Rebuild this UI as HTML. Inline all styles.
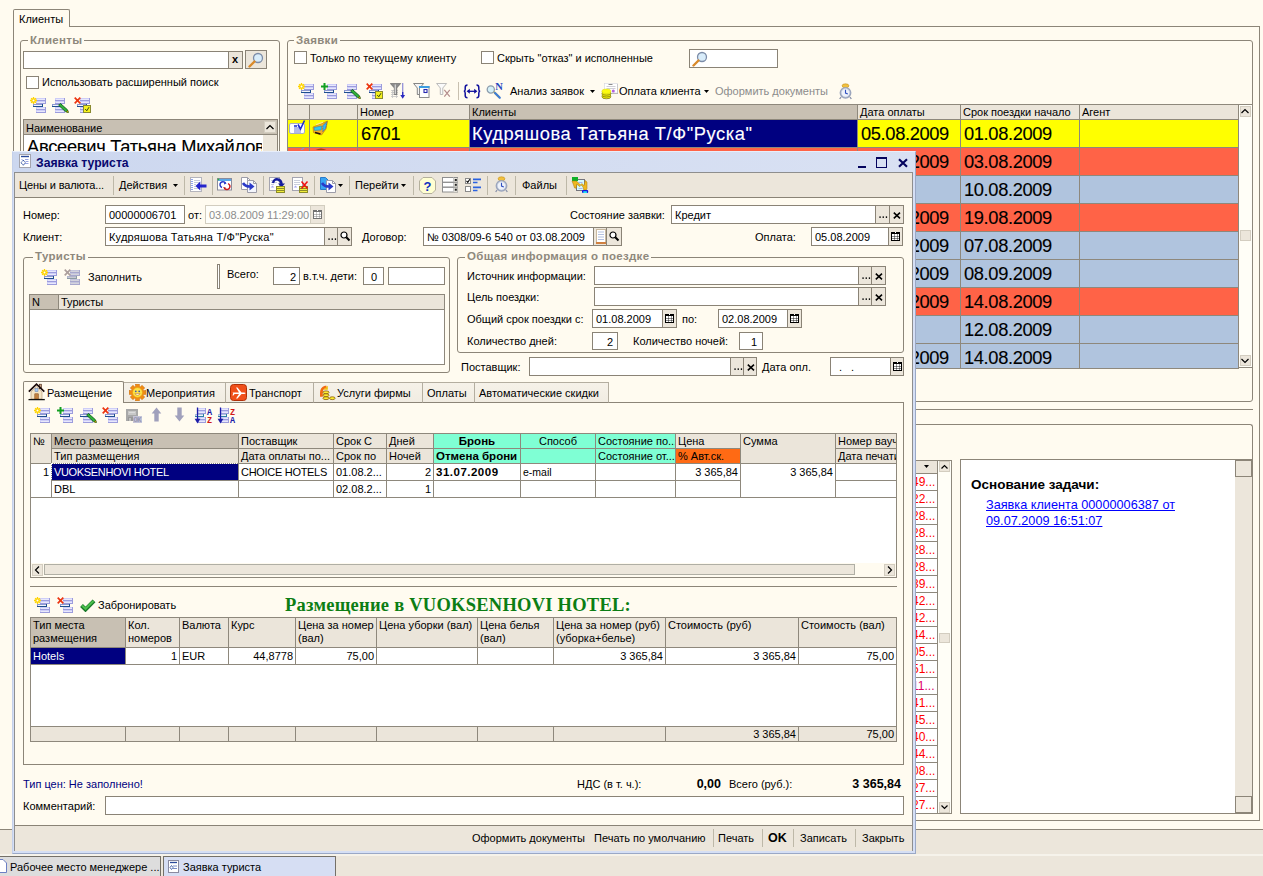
<!DOCTYPE html>
<html lang="ru"><head><meta charset="utf-8"><title>Заявка туриста</title>
<style>
html,body{margin:0;padding:0}
body{width:1263px;height:876px;overflow:hidden;position:relative;background:#ECE6DB;font:11px "Liberation Sans",sans-serif;color:#000}
div,svg,span.a{position:absolute;box-sizing:border-box}
.t{white-space:nowrap;line-height:14px;font-size:11px}
.ft{position:absolute;left:3px;top:2px;white-space:nowrap;line-height:14px}
.big{white-space:nowrap;font-size:18.3px;line-height:26px;-webkit-text-stroke:.12px currentColor}
.c{overflow:hidden;white-space:nowrap}
</style></head><body>

<div style="left:0px;top:0px;width:1263px;height:830px;background:#FFFBF0;border-bottom:1px solid #8C8578"></div>
<div style="left:13px;top:26px;width:1247px;height:795px;border:1px solid #8C8578"></div>
<div style="left:13px;top:9px;width:57px;height:18px;background:#FFFBF0;border:1px solid #8C8578;border-bottom:none;border-radius:2px 2px 0 0"></div>
<div class="t" style="left:19px;top:12px;">Клиенты</div>
<div style="left:20px;top:40px;width:260px;height:790px;border:1px solid #8C8578;border-radius:3px"></div>
<div class="t" style="left:28px;top:33px;background:#FFFBF0;padding:0 2px;font-weight:bold;color:#8E887C;font-size:11.5px;letter-spacing:.3px">Клиенты</div>
<div style="left:23px;top:51px;width:206px;height:18px;background:#fff;border:1px solid #8A8376;box-sizing:border-box;"></div>
<div class="b" style="left:228px;top:51px;width:15px;height:18px;background:#ECE6DB;border:1px solid #8A8376;box-sizing:border-box;"><span class="a" style="left:3px;top:0;font:bold 11px 'Liberation Sans';line-height:15px">x</span></div>
<div class="b" style="left:245px;top:50px;width:22px;height:19px;background:#ECE6DB;border:1px solid #8A8376;box-sizing:border-box;"></div>
<svg style="left:248px;top:52px" width="16" height="16" viewBox="0 0 16 16"><circle cx="10" cy="6" r="4.5" fill="#D8ECFA" stroke="#7C8CA8" stroke-width="1.3"/><path d="M6.5 9.5 L1.5 14.5" stroke="#D98A2B" stroke-width="2.4" stroke-linecap="round"/></svg>
<div style="left:26px;top:76px;width:13px;height:13px;background:#fff;border:1px solid #8A8376"></div>
<div class="t" style="left:42px;top:75px;">Использовать расширенный поиск</div>
<svg style="left:30px;top:97px" width="16" height="16" viewBox="0 0 16 16"><g shape-rendering="crispEdges"><rect x="6" y="1" width="10" height="3" fill="#CDCDF8"/><rect x="7" y="2" width="8" height="1" fill="#E8E8FB"/><rect x="6" y="3" width="10" height="1" fill="#9C9CDC"/><rect x="15" y="1" width="1" height="3" fill="#9C9CDC"/><rect x="6" y="4" width="10" height="3" fill="#CDCDF8"/><rect x="7" y="5" width="8" height="1" fill="#E8E8FB"/><rect x="6" y="6" width="10" height="1" fill="#9C9CDC"/><rect x="15" y="4" width="1" height="3" fill="#9C9CDC"/><rect x="3" y="7" width="10" height="3" fill="#8C98D0"/><rect x="4" y="8" width="8" height="1" fill="#F4F4FC"/><rect x="3" y="9" width="10" height="1" fill="#1E4E8E"/><rect x="12" y="7" width="1" height="3" fill="#1E4E8E"/><rect x="6" y="10" width="10" height="3" fill="#CDCDF8"/><rect x="7" y="11" width="8" height="1" fill="#E8E8FB"/><rect x="6" y="12" width="10" height="1" fill="#9C9CDC"/><rect x="15" y="10" width="1" height="3" fill="#9C9CDC"/><rect x="6" y="13" width="10" height="3" fill="#CDCDF8"/><rect x="7" y="14" width="8" height="1" fill="#E8E8FB"/><rect x="6" y="15" width="10" height="1" fill="#9C9CDC"/><rect x="15" y="13" width="1" height="3" fill="#9C9CDC"/></g><path d="M3.5 0V7M0 3.5H7M1.1 1.100L5.900 5.900M5.900 1.100L1.100 5.900" stroke="#FFD400" stroke-width="1.300"/><circle cx="3.500" cy="3.500" r="2.200" fill="#FFD400"/><circle cx="3.500" cy="3.500" r="1" fill="#fff"/></svg>
<svg style="left:49px;top:97px" width="20" height="16" viewBox="0 0 20 16"><g shape-rendering="crispEdges"><rect x="6" y="1" width="10" height="3" fill="#CDCDF8"/><rect x="7" y="2" width="8" height="1" fill="#E8E8FB"/><rect x="6" y="3" width="10" height="1" fill="#9C9CDC"/><rect x="15" y="1" width="1" height="3" fill="#9C9CDC"/><rect x="6" y="4" width="10" height="3" fill="#CDCDF8"/><rect x="7" y="5" width="8" height="1" fill="#E8E8FB"/><rect x="6" y="6" width="10" height="1" fill="#9C9CDC"/><rect x="15" y="4" width="1" height="3" fill="#9C9CDC"/><rect x="3" y="7" width="10" height="3" fill="#8C98D0"/><rect x="4" y="8" width="8" height="1" fill="#F4F4FC"/><rect x="3" y="9" width="10" height="1" fill="#1E4E8E"/><rect x="12" y="7" width="1" height="3" fill="#1E4E8E"/><rect x="6" y="10" width="10" height="3" fill="#CDCDF8"/><rect x="7" y="11" width="8" height="1" fill="#E8E8FB"/><rect x="6" y="12" width="10" height="1" fill="#9C9CDC"/><rect x="15" y="10" width="1" height="3" fill="#9C9CDC"/><rect x="6" y="13" width="10" height="3" fill="#CDCDF8"/><rect x="7" y="14" width="8" height="1" fill="#E8E8FB"/><rect x="6" y="15" width="10" height="1" fill="#9C9CDC"/><rect x="15" y="13" width="1" height="3" fill="#9C9CDC"/></g><path d="M9.6 8.2 L11.4 6.4 L18.3 12.6 L19.3 15.4 L16.4 14.6Z" fill="#2FB03A" stroke="#0B5B12" stroke-width=".8"/><path d="M17.2 14.9 L19.3 15.4 L18.7 13.2Z" fill="#F7E000" stroke="#3A3A00" stroke-width=".5"/></svg>
<svg style="left:74px;top:97px" width="17" height="16" viewBox="0 0 17 16"><g shape-rendering="crispEdges"><rect x="6" y="1" width="10" height="3" fill="#CDCDF8"/><rect x="7" y="2" width="8" height="1" fill="#E8E8FB"/><rect x="6" y="3" width="10" height="1" fill="#9C9CDC"/><rect x="15" y="1" width="1" height="3" fill="#9C9CDC"/><rect x="6" y="4" width="10" height="3" fill="#CDCDF8"/><rect x="7" y="5" width="8" height="1" fill="#E8E8FB"/><rect x="6" y="6" width="10" height="1" fill="#9C9CDC"/><rect x="15" y="4" width="1" height="3" fill="#9C9CDC"/><rect x="3" y="7" width="10" height="3" fill="#8C98D0"/><rect x="4" y="8" width="8" height="1" fill="#F4F4FC"/><rect x="3" y="9" width="10" height="1" fill="#1E4E8E"/><rect x="12" y="7" width="1" height="3" fill="#1E4E8E"/><rect x="6" y="10" width="10" height="3" fill="#CDCDF8"/><rect x="7" y="11" width="8" height="1" fill="#E8E8FB"/><rect x="6" y="12" width="10" height="1" fill="#9C9CDC"/><rect x="15" y="10" width="1" height="3" fill="#9C9CDC"/><rect x="6" y="13" width="10" height="3" fill="#CDCDF8"/><rect x="7" y="14" width="8" height="1" fill="#E8E8FB"/><rect x="6" y="15" width="10" height="1" fill="#9C9CDC"/><rect x="15" y="13" width="1" height="3" fill="#9C9CDC"/></g><path d="M0.700 0.700 L6.300 6.300 M6.300 0.700 L0.700 6.300" stroke="#EC3410" stroke-width="1.700"/><rect x="9.5" y="8.5" width="7" height="7" fill="#F4F01E" stroke="#8A8A30"/><path d="M11.2 12l1.6 1.8 2.2-3.6" stroke="#3A4A1A" fill="none"/></svg>
<div style="left:23px;top:119px;width:255px;height:700px;background:#fff;border:1px solid #8C8578"></div>
<div style="left:24px;top:120px;width:253px;height:15px;background:#C8C0B3;border-bottom:1px solid #8E887C"></div>
<div class="t" style="left:26px;top:121px;">Наименование</div>
<div style="left:264px;top:121px;width:12px;height:12px;background:#ECE6DB;border:1px solid #D3CDC0"></div>
<svg style="left:266px;top:124px" width="8" height="6" viewBox="0 0 8 6"><path d="M0.5 5 L4 1.5 L7.5 5" fill="none" stroke="#000" stroke-width="1.2"/></svg>
<div style="left:263px;top:135px;width:14px;height:20px;background:#ECE6DB"></div>
<div class="big c" style="left:27px;top:134px;width:235px;height:20px;letter-spacing:-0.28px">Авсеевич Татьяна Михайловна</div>
<div style="left:287px;top:40px;width:966px;height:362px;border:1px solid #8C8578;border-radius:3px"></div>
<div class="t" style="left:294px;top:33px;background:#FFFBF0;padding:0 2px;font-weight:bold;color:#8E887C;font-size:11.5px;letter-spacing:.3px">Заявки</div>
<div style="left:294px;top:51px;width:13px;height:13px;background:#fff;border:1px solid #8A8376"></div>
<div class="t" style="left:310px;top:51px;">Только по текущему клиенту</div>
<div style="left:481px;top:51px;width:13px;height:13px;background:#fff;border:1px solid #8A8376"></div>
<div class="t" style="left:497px;top:51px;">Скрыть &quot;отказ&quot; и исполненные</div>
<div style="left:689px;top:49px;width:89px;height:19px;background:#fff;border:1px solid #8A8376;box-sizing:border-box;"></div>
<svg style="left:692px;top:51px" width="16" height="16" viewBox="0 0 16 16"><circle cx="10" cy="6" r="4.5" fill="#D8ECFA" stroke="#7C8CA8" stroke-width="1.3"/><path d="M6.5 9.5 L1.5 14.5" stroke="#D98A2B" stroke-width="2.4" stroke-linecap="round"/></svg>
<svg style="left:298px;top:83px" width="16" height="16" viewBox="0 0 16 16"><g shape-rendering="crispEdges"><rect x="6" y="1" width="10" height="3" fill="#CDCDF8"/><rect x="7" y="2" width="8" height="1" fill="#E8E8FB"/><rect x="6" y="3" width="10" height="1" fill="#9C9CDC"/><rect x="15" y="1" width="1" height="3" fill="#9C9CDC"/><rect x="6" y="4" width="10" height="3" fill="#CDCDF8"/><rect x="7" y="5" width="8" height="1" fill="#E8E8FB"/><rect x="6" y="6" width="10" height="1" fill="#9C9CDC"/><rect x="15" y="4" width="1" height="3" fill="#9C9CDC"/><rect x="3" y="7" width="10" height="3" fill="#8C98D0"/><rect x="4" y="8" width="8" height="1" fill="#F4F4FC"/><rect x="3" y="9" width="10" height="1" fill="#1E4E8E"/><rect x="12" y="7" width="1" height="3" fill="#1E4E8E"/><rect x="6" y="10" width="10" height="3" fill="#CDCDF8"/><rect x="7" y="11" width="8" height="1" fill="#E8E8FB"/><rect x="6" y="12" width="10" height="1" fill="#9C9CDC"/><rect x="15" y="10" width="1" height="3" fill="#9C9CDC"/><rect x="6" y="13" width="10" height="3" fill="#CDCDF8"/><rect x="7" y="14" width="8" height="1" fill="#E8E8FB"/><rect x="6" y="15" width="10" height="1" fill="#9C9CDC"/><rect x="15" y="13" width="1" height="3" fill="#9C9CDC"/></g><path d="M3.5 0V7M0 3.5H7M1.1 1.100L5.900 5.900M5.900 1.100L1.100 5.900" stroke="#FFD400" stroke-width="1.300"/><circle cx="3.500" cy="3.500" r="2.200" fill="#FFD400"/><circle cx="3.500" cy="3.500" r="1" fill="#fff"/></svg>
<svg style="left:321px;top:83px" width="16" height="16" viewBox="0 0 16 16"><g shape-rendering="crispEdges"><rect x="6" y="1" width="10" height="3" fill="#CDCDF8"/><rect x="7" y="2" width="8" height="1" fill="#E8E8FB"/><rect x="6" y="3" width="10" height="1" fill="#9C9CDC"/><rect x="15" y="1" width="1" height="3" fill="#9C9CDC"/><rect x="6" y="4" width="10" height="3" fill="#CDCDF8"/><rect x="7" y="5" width="8" height="1" fill="#E8E8FB"/><rect x="6" y="6" width="10" height="1" fill="#9C9CDC"/><rect x="15" y="4" width="1" height="3" fill="#9C9CDC"/><rect x="3" y="7" width="10" height="3" fill="#8C98D0"/><rect x="4" y="8" width="8" height="1" fill="#F4F4FC"/><rect x="3" y="9" width="10" height="1" fill="#1E4E8E"/><rect x="12" y="7" width="1" height="3" fill="#1E4E8E"/><rect x="6" y="10" width="10" height="3" fill="#CDCDF8"/><rect x="7" y="11" width="8" height="1" fill="#E8E8FB"/><rect x="6" y="12" width="10" height="1" fill="#9C9CDC"/><rect x="15" y="10" width="1" height="3" fill="#9C9CDC"/><rect x="6" y="13" width="10" height="3" fill="#CDCDF8"/><rect x="7" y="14" width="8" height="1" fill="#E8E8FB"/><rect x="6" y="15" width="10" height="1" fill="#9C9CDC"/><rect x="15" y="13" width="1" height="3" fill="#9C9CDC"/></g><path d="M0 3.5H7M3.5 0V7" stroke="#12A022" stroke-width="2"/></svg>
<svg style="left:341px;top:83px" width="20" height="16" viewBox="0 0 20 16"><g shape-rendering="crispEdges"><rect x="6" y="1" width="10" height="3" fill="#CDCDF8"/><rect x="7" y="2" width="8" height="1" fill="#E8E8FB"/><rect x="6" y="3" width="10" height="1" fill="#9C9CDC"/><rect x="15" y="1" width="1" height="3" fill="#9C9CDC"/><rect x="6" y="4" width="10" height="3" fill="#CDCDF8"/><rect x="7" y="5" width="8" height="1" fill="#E8E8FB"/><rect x="6" y="6" width="10" height="1" fill="#9C9CDC"/><rect x="15" y="4" width="1" height="3" fill="#9C9CDC"/><rect x="3" y="7" width="10" height="3" fill="#8C98D0"/><rect x="4" y="8" width="8" height="1" fill="#F4F4FC"/><rect x="3" y="9" width="10" height="1" fill="#1E4E8E"/><rect x="12" y="7" width="1" height="3" fill="#1E4E8E"/><rect x="6" y="10" width="10" height="3" fill="#CDCDF8"/><rect x="7" y="11" width="8" height="1" fill="#E8E8FB"/><rect x="6" y="12" width="10" height="1" fill="#9C9CDC"/><rect x="15" y="10" width="1" height="3" fill="#9C9CDC"/><rect x="6" y="13" width="10" height="3" fill="#CDCDF8"/><rect x="7" y="14" width="8" height="1" fill="#E8E8FB"/><rect x="6" y="15" width="10" height="1" fill="#9C9CDC"/><rect x="15" y="13" width="1" height="3" fill="#9C9CDC"/></g><path d="M9.6 8.2 L11.4 6.4 L18.3 12.6 L19.3 15.4 L16.4 14.6Z" fill="#2FB03A" stroke="#0B5B12" stroke-width=".8"/><path d="M17.2 14.9 L19.3 15.4 L18.7 13.2Z" fill="#F7E000" stroke="#3A3A00" stroke-width=".5"/></svg>
<svg style="left:366px;top:83px" width="17" height="16" viewBox="0 0 17 16"><g shape-rendering="crispEdges"><rect x="6" y="1" width="10" height="3" fill="#CDCDF8"/><rect x="7" y="2" width="8" height="1" fill="#E8E8FB"/><rect x="6" y="3" width="10" height="1" fill="#9C9CDC"/><rect x="15" y="1" width="1" height="3" fill="#9C9CDC"/><rect x="6" y="4" width="10" height="3" fill="#CDCDF8"/><rect x="7" y="5" width="8" height="1" fill="#E8E8FB"/><rect x="6" y="6" width="10" height="1" fill="#9C9CDC"/><rect x="15" y="4" width="1" height="3" fill="#9C9CDC"/><rect x="3" y="7" width="10" height="3" fill="#8C98D0"/><rect x="4" y="8" width="8" height="1" fill="#F4F4FC"/><rect x="3" y="9" width="10" height="1" fill="#1E4E8E"/><rect x="12" y="7" width="1" height="3" fill="#1E4E8E"/><rect x="6" y="10" width="10" height="3" fill="#CDCDF8"/><rect x="7" y="11" width="8" height="1" fill="#E8E8FB"/><rect x="6" y="12" width="10" height="1" fill="#9C9CDC"/><rect x="15" y="10" width="1" height="3" fill="#9C9CDC"/><rect x="6" y="13" width="10" height="3" fill="#CDCDF8"/><rect x="7" y="14" width="8" height="1" fill="#E8E8FB"/><rect x="6" y="15" width="10" height="1" fill="#9C9CDC"/><rect x="15" y="13" width="1" height="3" fill="#9C9CDC"/></g><path d="M0.700 0.700 L6.300 6.300 M6.300 0.700 L0.700 6.300" stroke="#EC3410" stroke-width="1.700"/><rect x="9.5" y="8.5" width="7" height="7" fill="#F4F01E" stroke="#8A8A30"/><path d="M11.2 12l1.6 1.8 2.2-3.6" stroke="#3A4A1A" fill="none"/></svg>
<svg style="left:390px;top:83px" width="16" height="16" viewBox="0 0 16 16"><path d="M1 7.500h7M1 9.500h7M1 11.500h7M1 13.500h7M2.500 7v8M6.500 7v8" stroke="#C4C4C4" stroke-width=".8"/><path d="M0.300 0.500H10.700L6.800 5V11.500H4.300V5Z" fill="#8C8C8C" stroke="#5C5C5C" stroke-width=".6"/><path d="M5.300 1.500V11" stroke="#D8D8D8" stroke-width="1.200"/><path d="M12.700 0.500V12" stroke="#2828C0" stroke-width="1.300" stroke-dasharray="1 1"/><path d="M12.700 9V13" stroke="#2828C0" stroke-width="1.300"/><path d="M10.300 12H15.100L12.700 15.800Z" fill="#2828C0"/></svg>
<svg style="left:413px;top:83px" width="17" height="16" viewBox="0 0 17 16"><path d="M0.600 0.500H10.600L6.800 5V11.500H4.300V5Z" fill="#F4F4F4" stroke="#787878" stroke-width=".9"/><rect x="6.500" y="3.500" width="9.500" height="11" fill="#fff" stroke="#8C8C8C"/><rect x="6" y="3" width="10.500" height="2" fill="#3C9CE0"/><rect x="11" y="6.500" width="3" height="3" fill="#fff" stroke="#2828B0" stroke-width="1.100"/></svg>
<svg style="left:436px;top:83px" width="16" height="16" viewBox="0 0 16 16"><path d="M0.600 0.500H10.600L6.800 5V11.500H4.300V5Z" fill="#FAFAFA" stroke="#B4B4B4" stroke-width=".9"/><path d="M8.300 6.800L13.800 13.600M13.800 6.800L8.300 13.600" stroke="#B48C8C" stroke-width="1.200"/></svg>
<div style="left:458px;top:82px;width:1px;height:18px;background:#C8C0B0"></div>
<svg style="left:463px;top:84px" width="18" height="15" viewBox="0 0 18 15"><path d="M4.500 1Q2.200 1 2.200 3.500V5.500Q2.200 7.200 0.800 7.200Q2.200 7.200 2.200 9V11.500Q2.200 13.800 4.500 13.800M13.500 1Q15.800 1 15.800 3.500V5.500Q15.800 7.200 17.200 7.200Q15.800 7.200 15.800 9V11.500Q15.800 13.800 13.500 13.800" fill="none" stroke="#10109C" stroke-width="1.500"/><path d="M5 7.300H13" stroke="#10109C" stroke-width="1.300"/><path d="M3.600 7.300L6.800 4.800V9.800ZM14.400 7.300L11.200 4.800V9.800Z" fill="#10109C"/></svg>
<svg style="left:486px;top:82px" width="18" height="18" viewBox="0 0 18 18"><path d="M7.500 9.500L13.500 15.500" stroke="#E8D040" stroke-width="2.200"/><path d="M9 11L13.800 15.800" stroke="#3C7CD8" stroke-width="2.200" stroke-linecap="round"/><circle cx="4.800" cy="7.500" r="3.600" fill="#D4F0F8" stroke="#8C9CAC" stroke-width="1.300"/><text x="9.300" y="8.200" font-family="Liberation Serif" font-size="10.500" font-weight="bold" fill="#2448C0">N</text></svg>
<div class="t" style="left:510px;top:84px;">Анализ заявок</div>
<svg style="left:590px;top:90px" width="5" height="3" viewBox="0 0 5 3"><path d="M0 0H5L2.5 3Z" fill="#000"/></svg>
<svg style="left:601px;top:83px" width="18" height="17" viewBox="0 0 18 17"><rect x="4" y="1" width="13" height="9.800" fill="#9C9C9C"/><rect x="3.300" y="0.300" width="13" height="9.700" fill="#fff" stroke="#D4D4DC" stroke-width=".6"/><path d="M7.500 1.500h4" stroke="#8C8C8C" stroke-width="1"/><path d="M5.500 3.500h9M5.500 5.500h9" stroke="#C4C4CC" stroke-width=".8"/><circle cx="12.300" cy="8" r="1.500" fill="#B060E0"/><ellipse cx="5.400" cy="13.800" rx="4.500" ry="2" fill="#F0EC00" stroke="#74741C" stroke-width=".7"/><ellipse cx="5.400" cy="12" rx="4.500" ry="2" fill="#F0EC00" stroke="#74741C" stroke-width=".7"/><ellipse cx="5.400" cy="10.200" rx="4.500" ry="2" fill="#F0EC00" stroke="#74741C" stroke-width=".7"/><ellipse cx="5.400" cy="8.300" rx="4.500" ry="2.200" fill="#FCFC10" stroke="#DCDC20" stroke-width=".6"/></svg>
<div class="t" style="left:619px;top:84px;">Оплата клиента</div>
<svg style="left:704px;top:90px" width="5" height="3" viewBox="0 0 5 3"><path d="M0 0H5L2.5 3Z" fill="#000"/></svg>
<div class="t" style="left:715px;top:84px;color:#8C8C8C">Оформить документы</div>
<svg style="left:838px;top:83px" width="15" height="18" viewBox="0 0 15 18"><ellipse cx="7.500" cy="2.800" rx="3.400" ry="2" fill="#F0C040" stroke="#C89018" stroke-width=".6"/><path d="M3 14l-1.300 2M12 14l1.300 2" stroke="#8890A8" stroke-width="1.300"/><circle cx="7.500" cy="9.800" r="5.900" fill="#9AA4BC"/><circle cx="7.500" cy="9.800" r="4.200" fill="#EEF2FA" stroke="#C8D0E0" stroke-width=".6"/><path d="M7.500 6.800V10.100L9.800 11.100" stroke="#3050C0" fill="none" stroke-width="1.100"/></svg>
<div style="left:287px;top:104px;width:965px;height:264px;background:#FFFBF0;border:1px solid #8E887C"></div>
<div style="left:287px;top:104px;width:23px;height:16px;background:#EBE5DA;border:1px solid #8E887C"></div>
<div style="left:309px;top:104px;width:49px;height:16px;background:#EBE5DA;border:1px solid #8E887C"></div>
<div style="left:357px;top:104px;width:113px;height:16px;background:#EBE5DA;border:1px solid #8E887C"></div>
<div class="t" style="left:360px;top:105px;">Номер</div>
<div style="left:469px;top:104px;width:389px;height:16px;background:#C8C0B3;border:1px solid #8E887C"></div>
<div class="t" style="left:472px;top:105px;">Клиенты</div>
<div style="left:857px;top:104px;width:104px;height:16px;background:#EBE5DA;border:1px solid #8E887C"></div>
<div class="t" style="left:860px;top:105px;">Дата оплаты</div>
<div style="left:960px;top:104px;width:120px;height:16px;background:#EBE5DA;border:1px solid #8E887C"></div>
<div class="t" style="left:963px;top:105px;">Срок поездки начало</div>
<div style="left:1079px;top:104px;width:160px;height:16px;background:#EBE5DA;border:1px solid #8E887C"></div>
<div class="t" style="left:1082px;top:105px;">Агент</div>
<div style="left:287px;top:119px;width:23px;height:29px;background:#FFFF00;border:1px solid #8E887C;color:#000;overflow:hidden"></div>
<div style="left:309px;top:119px;width:49px;height:29px;background:#FFFF00;border:1px solid #8E887C;color:#000;overflow:hidden"></div>
<div style="left:357px;top:119px;width:113px;height:29px;background:#FFFF00;border:1px solid #8E887C;color:#000;overflow:hidden"><span class="a big" style="left:3px;top:1px;letter-spacing:-0.36px">6701</span></div>
<div style="left:469px;top:119px;width:389px;height:29px;background:#000080;border:1px solid #8E887C;color:#fff;overflow:hidden"><span class="a big" style="left:2px;top:1px;letter-spacing:0.57px">Кудряшова Татьяна Т/Ф&quot;Руска&quot;</span></div>
<div style="left:857px;top:119px;width:104px;height:29px;background:#FFFF00;border:1px solid #8E887C;color:#000;overflow:hidden"><span class="a big" style="left:3px;top:1px;letter-spacing:-0.36px">05.08.2009</span></div>
<div style="left:960px;top:119px;width:120px;height:29px;background:#FFFF00;border:1px solid #8E887C;color:#000;overflow:hidden"><span class="a big" style="left:3px;top:1px;letter-spacing:-0.36px">01.08.2009</span></div>
<div style="left:1079px;top:119px;width:160px;height:29px;background:#FFFF00;border:1px solid #8E887C;color:#000;overflow:hidden"></div>
<div style="left:287px;top:147px;width:23px;height:29px;background:#FF6347;border:1px solid #8E887C;color:#000;overflow:hidden"></div>
<div style="left:309px;top:147px;width:49px;height:29px;background:#FF6347;border:1px solid #8E887C;color:#000;overflow:hidden"></div>
<div style="left:357px;top:147px;width:113px;height:29px;background:#FF6347;border:1px solid #8E887C;color:#000;overflow:hidden"></div>
<div style="left:469px;top:147px;width:389px;height:29px;background:#FF6347;border:1px solid #8E887C;color:#000;overflow:hidden"></div>
<div style="left:857px;top:147px;width:104px;height:29px;background:#FF6347;border:1px solid #8E887C;color:#000;overflow:hidden"><span class="a big" style="left:3px;top:1px;letter-spacing:-0.36px">05.08.2009</span></div>
<div style="left:960px;top:147px;width:120px;height:29px;background:#FF6347;border:1px solid #8E887C;color:#000;overflow:hidden"><span class="a big" style="left:3px;top:1px;letter-spacing:-0.36px">03.08.2009</span></div>
<div style="left:1079px;top:147px;width:160px;height:29px;background:#FF6347;border:1px solid #8E887C;color:#000;overflow:hidden"></div>
<div style="left:287px;top:175px;width:23px;height:29px;background:#B0C4DE;border:1px solid #8E887C;color:#000;overflow:hidden"></div>
<div style="left:309px;top:175px;width:49px;height:29px;background:#B0C4DE;border:1px solid #8E887C;color:#000;overflow:hidden"></div>
<div style="left:357px;top:175px;width:113px;height:29px;background:#B0C4DE;border:1px solid #8E887C;color:#000;overflow:hidden"></div>
<div style="left:469px;top:175px;width:389px;height:29px;background:#B0C4DE;border:1px solid #8E887C;color:#000;overflow:hidden"></div>
<div style="left:857px;top:175px;width:104px;height:29px;background:#B0C4DE;border:1px solid #8E887C;color:#000;overflow:hidden"></div>
<div style="left:960px;top:175px;width:120px;height:29px;background:#B0C4DE;border:1px solid #8E887C;color:#000;overflow:hidden"><span class="a big" style="left:3px;top:1px;letter-spacing:-0.36px">10.08.2009</span></div>
<div style="left:1079px;top:175px;width:160px;height:29px;background:#B0C4DE;border:1px solid #8E887C;color:#000;overflow:hidden"></div>
<div style="left:287px;top:203px;width:23px;height:29px;background:#FF6347;border:1px solid #8E887C;color:#000;overflow:hidden"></div>
<div style="left:309px;top:203px;width:49px;height:29px;background:#FF6347;border:1px solid #8E887C;color:#000;overflow:hidden"></div>
<div style="left:357px;top:203px;width:113px;height:29px;background:#FF6347;border:1px solid #8E887C;color:#000;overflow:hidden"></div>
<div style="left:469px;top:203px;width:389px;height:29px;background:#FF6347;border:1px solid #8E887C;color:#000;overflow:hidden"></div>
<div style="left:857px;top:203px;width:104px;height:29px;background:#FF6347;border:1px solid #8E887C;color:#000;overflow:hidden"><span class="a big" style="left:3px;top:1px;letter-spacing:-0.36px">17.08.2009</span></div>
<div style="left:960px;top:203px;width:120px;height:29px;background:#FF6347;border:1px solid #8E887C;color:#000;overflow:hidden"><span class="a big" style="left:3px;top:1px;letter-spacing:-0.36px">19.08.2009</span></div>
<div style="left:1079px;top:203px;width:160px;height:29px;background:#FF6347;border:1px solid #8E887C;color:#000;overflow:hidden"></div>
<div style="left:287px;top:231px;width:23px;height:29px;background:#B0C4DE;border:1px solid #8E887C;color:#000;overflow:hidden"></div>
<div style="left:309px;top:231px;width:49px;height:29px;background:#B0C4DE;border:1px solid #8E887C;color:#000;overflow:hidden"></div>
<div style="left:357px;top:231px;width:113px;height:29px;background:#B0C4DE;border:1px solid #8E887C;color:#000;overflow:hidden"></div>
<div style="left:469px;top:231px;width:389px;height:29px;background:#B0C4DE;border:1px solid #8E887C;color:#000;overflow:hidden"></div>
<div style="left:857px;top:231px;width:104px;height:29px;background:#B0C4DE;border:1px solid #8E887C;color:#000;overflow:hidden"><span class="a big" style="left:3px;top:1px;letter-spacing:-0.36px">05.08.2009</span></div>
<div style="left:960px;top:231px;width:120px;height:29px;background:#B0C4DE;border:1px solid #8E887C;color:#000;overflow:hidden"><span class="a big" style="left:3px;top:1px;letter-spacing:-0.36px">07.08.2009</span></div>
<div style="left:1079px;top:231px;width:160px;height:29px;background:#B0C4DE;border:1px solid #8E887C;color:#000;overflow:hidden"></div>
<div style="left:287px;top:259px;width:23px;height:29px;background:#B0C4DE;border:1px solid #8E887C;color:#000;overflow:hidden"></div>
<div style="left:309px;top:259px;width:49px;height:29px;background:#B0C4DE;border:1px solid #8E887C;color:#000;overflow:hidden"></div>
<div style="left:357px;top:259px;width:113px;height:29px;background:#B0C4DE;border:1px solid #8E887C;color:#000;overflow:hidden"></div>
<div style="left:469px;top:259px;width:389px;height:29px;background:#B0C4DE;border:1px solid #8E887C;color:#000;overflow:hidden"></div>
<div style="left:857px;top:259px;width:104px;height:29px;background:#B0C4DE;border:1px solid #8E887C;color:#000;overflow:hidden"><span class="a big" style="left:3px;top:1px;letter-spacing:-0.36px">05.08.2009</span></div>
<div style="left:960px;top:259px;width:120px;height:29px;background:#B0C4DE;border:1px solid #8E887C;color:#000;overflow:hidden"><span class="a big" style="left:3px;top:1px;letter-spacing:-0.36px">08.09.2009</span></div>
<div style="left:1079px;top:259px;width:160px;height:29px;background:#B0C4DE;border:1px solid #8E887C;color:#000;overflow:hidden"></div>
<div style="left:287px;top:287px;width:23px;height:29px;background:#FF6347;border:1px solid #8E887C;color:#000;overflow:hidden"></div>
<div style="left:309px;top:287px;width:49px;height:29px;background:#FF6347;border:1px solid #8E887C;color:#000;overflow:hidden"></div>
<div style="left:357px;top:287px;width:113px;height:29px;background:#FF6347;border:1px solid #8E887C;color:#000;overflow:hidden"></div>
<div style="left:469px;top:287px;width:389px;height:29px;background:#FF6347;border:1px solid #8E887C;color:#000;overflow:hidden"></div>
<div style="left:857px;top:287px;width:104px;height:29px;background:#FF6347;border:1px solid #8E887C;color:#000;overflow:hidden"><span class="a big" style="left:3px;top:1px;letter-spacing:-0.36px">10.08.2009</span></div>
<div style="left:960px;top:287px;width:120px;height:29px;background:#FF6347;border:1px solid #8E887C;color:#000;overflow:hidden"><span class="a big" style="left:3px;top:1px;letter-spacing:-0.36px">14.08.2009</span></div>
<div style="left:1079px;top:287px;width:160px;height:29px;background:#FF6347;border:1px solid #8E887C;color:#000;overflow:hidden"></div>
<div style="left:287px;top:315px;width:23px;height:29px;background:#B0C4DE;border:1px solid #8E887C;color:#000;overflow:hidden"></div>
<div style="left:309px;top:315px;width:49px;height:29px;background:#B0C4DE;border:1px solid #8E887C;color:#000;overflow:hidden"></div>
<div style="left:357px;top:315px;width:113px;height:29px;background:#B0C4DE;border:1px solid #8E887C;color:#000;overflow:hidden"></div>
<div style="left:469px;top:315px;width:389px;height:29px;background:#B0C4DE;border:1px solid #8E887C;color:#000;overflow:hidden"></div>
<div style="left:857px;top:315px;width:104px;height:29px;background:#B0C4DE;border:1px solid #8E887C;color:#000;overflow:hidden"></div>
<div style="left:960px;top:315px;width:120px;height:29px;background:#B0C4DE;border:1px solid #8E887C;color:#000;overflow:hidden"><span class="a big" style="left:3px;top:1px;letter-spacing:-0.36px">12.08.2009</span></div>
<div style="left:1079px;top:315px;width:160px;height:29px;background:#B0C4DE;border:1px solid #8E887C;color:#000;overflow:hidden"></div>
<div style="left:287px;top:343px;width:23px;height:26px;background:#B0C4DE;border:1px solid #8E887C;color:#000;overflow:hidden"></div>
<div style="left:309px;top:343px;width:49px;height:26px;background:#B0C4DE;border:1px solid #8E887C;color:#000;overflow:hidden"></div>
<div style="left:357px;top:343px;width:113px;height:26px;background:#B0C4DE;border:1px solid #8E887C;color:#000;overflow:hidden"></div>
<div style="left:469px;top:343px;width:389px;height:26px;background:#B0C4DE;border:1px solid #8E887C;color:#000;overflow:hidden"></div>
<div style="left:857px;top:343px;width:104px;height:26px;background:#B0C4DE;border:1px solid #8E887C;color:#000;overflow:hidden"><span class="a big" style="left:3px;top:1px;letter-spacing:-0.36px">10.08.2009</span></div>
<div style="left:960px;top:343px;width:120px;height:26px;background:#B0C4DE;border:1px solid #8E887C;color:#000;overflow:hidden"><span class="a big" style="left:3px;top:1px;letter-spacing:-0.36px">14.08.2009</span></div>
<div style="left:1079px;top:343px;width:160px;height:26px;background:#B0C4DE;border:1px solid #8E887C;color:#000;overflow:hidden"></div>
<div style="left:1239px;top:104px;width:14px;height:264px;background:#FFFEF7;border:1px solid #8E887C;border-left:none"></div>
<div style="left:1240px;top:106px;width:11px;height:11px;background:#ECE6DB;border:1px solid #D3CDC0"></div>
<svg style="left:1241px;top:108px" width="8" height="6" viewBox="0 0 8 6"><path d="M0.5 5 L4 1.5 L7.5 5" fill="none" stroke="#000" stroke-width="1.2"/></svg>
<div style="left:1240px;top:355px;width:11px;height:11px;background:#ECE6DB;border:1px solid #D3CDC0"></div>
<svg style="left:1241px;top:358px" width="8" height="6" viewBox="0 0 8 6"><path d="M0.5 1 L4 4.5 L7.5 1" fill="none" stroke="#000" stroke-width="1.2"/></svg>
<div style="left:1240px;top:230px;width:11px;height:11px;background:#ECE6DB;border:1px solid #D3CDC0"></div>
<svg style="left:289px;top:120px" width="17" height="15" viewBox="0 0 17 15"><rect x="0.500" y="3.500" width="15" height="10" rx="1.500" fill="#fff" stroke="#A4ACCC"/><path d="M5 6h3M5 8h7M5 10h7M5 12h7" stroke="#5868D0" stroke-width=".9"/><path d="M5 6h3" stroke="#1C2CD0" stroke-width="1.300"/><path d="M9 4.500L11.500 9L15.500 0.500" stroke="#1C2CD0" fill="none" stroke-width="1.600"/></svg>
<svg style="left:312px;top:120px" width="17" height="16" viewBox="0 0 17 16"><path d="M1 7L11 3L15.500 1L14 9L9.500 15L1.500 12.500Z" fill="#F4B020" stroke="#B87010" stroke-width=".6"/><path d="M2 7.500L9.500 6L9.200 10L2.500 10.500Z" fill="#30C8F0" stroke="#2080B0" stroke-width=".5"/><path d="M10.800 5.500L15 1.800L13.600 8.500L10.800 11.500Z" fill="#38B8F0" stroke="#2040A0" stroke-width=".6" stroke-dasharray="1 .6"/><path d="M3 12.500L8.500 14" stroke="#201008" stroke-width="1.400"/><path d="M4 4.800L11 2.200" stroke="#FFE890" stroke-width="1.200"/></svg>
<svg style="left:300px;top:148px" width="6" height="2" viewBox="0 0 6 2"><path d="M1 2L4 0" stroke="#8090E0" stroke-width="1.200"/></svg>
<svg style="left:315px;top:148px" width="12" height="2" viewBox="0 0 12 2"><path d="M0.500 2Q6 -1 11.500 2Z" fill="#A83C10"/></svg>
<div style="left:287px;top:409px;width:966px;height:1px;background:#8C8578"></div>
<div style="left:287px;top:424px;width:966px;height:390px;border:1px solid #8C8578;border-bottom:none;border-radius:3px 3px 0 0"></div>
<div style="left:900px;top:460px;width:38px;height:354px;background:#fff;border:1px solid #8E887C"></div>
<div style="left:900px;top:460px;width:38px;height:14px;background:#EBE5DA;border:1px solid #8E887C"></div>
<svg style="left:924px;top:465px" width="5" height="3" viewBox="0 0 5 3"><path d="M0 0H5L2.5 3Z" fill="#000"/></svg>
<div style="left:900px;top:473px;width:38px;height:18px;border:1px solid #8E887C"></div>
<div class="t" style="left:912px;top:475px;color:#FF0000;font-size:12px">49...</div>
<div style="left:900px;top:490px;width:38px;height:18px;border:1px solid #8E887C"></div>
<div class="t" style="left:912px;top:492px;color:#FF0000;font-size:12px">22...</div>
<div style="left:900px;top:507px;width:38px;height:18px;border:1px solid #8E887C"></div>
<div class="t" style="left:912px;top:509px;color:#FF0000;font-size:12px">28...</div>
<div style="left:900px;top:524px;width:38px;height:18px;border:1px solid #8E887C"></div>
<div class="t" style="left:912px;top:526px;color:#FF0000;font-size:12px">28...</div>
<div style="left:900px;top:541px;width:38px;height:18px;border:1px solid #8E887C"></div>
<div class="t" style="left:912px;top:543px;color:#FF0000;font-size:12px">28...</div>
<div style="left:900px;top:558px;width:38px;height:18px;border:1px solid #8E887C"></div>
<div class="t" style="left:912px;top:560px;color:#FF0000;font-size:12px">28...</div>
<div style="left:900px;top:575px;width:38px;height:18px;border:1px solid #8E887C"></div>
<div class="t" style="left:912px;top:577px;color:#FF0000;font-size:12px">39...</div>
<div style="left:900px;top:592px;width:38px;height:18px;border:1px solid #8E887C"></div>
<div class="t" style="left:912px;top:594px;color:#FF0000;font-size:12px">42...</div>
<div style="left:900px;top:609px;width:38px;height:18px;border:1px solid #8E887C"></div>
<div class="t" style="left:912px;top:611px;color:#FF0000;font-size:12px">42...</div>
<div style="left:900px;top:626px;width:38px;height:18px;border:1px solid #8E887C"></div>
<div class="t" style="left:912px;top:628px;color:#FF0000;font-size:12px">44...</div>
<div style="left:900px;top:643px;width:38px;height:18px;border:1px solid #8E887C"></div>
<div class="t" style="left:912px;top:645px;color:#FF0000;font-size:12px">05...</div>
<div style="left:900px;top:660px;width:38px;height:18px;border:1px solid #8E887C"></div>
<div class="t" style="left:912px;top:662px;color:#FF0000;font-size:12px">51...</div>
<div style="left:900px;top:677px;width:38px;height:18px;border:1px solid #8E887C"></div>
<div class="t" style="left:912px;top:679px;color:#E0006A;font-size:12px">11...</div>
<div style="left:900px;top:694px;width:38px;height:18px;border:1px solid #8E887C"></div>
<div class="t" style="left:912px;top:696px;color:#FF0000;font-size:12px">41...</div>
<div style="left:900px;top:711px;width:38px;height:18px;border:1px solid #8E887C"></div>
<div class="t" style="left:912px;top:713px;color:#FF0000;font-size:12px">45...</div>
<div style="left:900px;top:728px;width:38px;height:18px;border:1px solid #8E887C"></div>
<div class="t" style="left:912px;top:730px;color:#FF0000;font-size:12px">40...</div>
<div style="left:900px;top:745px;width:38px;height:18px;border:1px solid #8E887C"></div>
<div class="t" style="left:912px;top:747px;color:#FF0000;font-size:12px">44...</div>
<div style="left:900px;top:762px;width:38px;height:18px;border:1px solid #8E887C"></div>
<div class="t" style="left:912px;top:764px;color:#FF0000;font-size:12px">08...</div>
<div style="left:900px;top:779px;width:38px;height:18px;border:1px solid #8E887C"></div>
<div class="t" style="left:912px;top:781px;color:#FF0000;font-size:12px">27...</div>
<div style="left:900px;top:796px;width:38px;height:18px;border:1px solid #8E887C"></div>
<div class="t" style="left:912px;top:798px;color:#FF0000;font-size:12px">27...</div>
<div style="left:938px;top:460px;width:14px;height:354px;background:#FFFEF7;border:1px solid #8E887C;border-left:none"></div>
<div style="left:939px;top:461px;width:11px;height:11px;background:#ECE6DB;border:1px solid #D3CDC0"></div>
<svg style="left:941px;top:464px" width="7" height="5" viewBox="0 0 7 5"><path d="M0.5 4.5 L3.5 1.5 L6.5 4.5" fill="none" stroke="#000" stroke-width="1.2"/></svg>
<div style="left:939px;top:802px;width:11px;height:11px;background:#ECE6DB;border:1px solid #D3CDC0"></div>
<svg style="left:941px;top:805px" width="7" height="5" viewBox="0 0 7 5"><path d="M0.5 0.5 L3.5 3.5 L6.5 0.5" fill="none" stroke="#000" stroke-width="1.2"/></svg>
<div style="left:939px;top:633px;width:11px;height:10px;background:#ECE6DB;border:1px solid #D3CDC0"></div>
<div style="left:960px;top:459px;width:293px;height:355px;background:#fff;border:1px solid #8C8578"></div>
<div style="left:1235px;top:460px;width:17px;height:353px;background:#ECE6DB"></div>
<div style="left:1235px;top:460px;width:18px;height:17px;background:#ECE6DB;border:1px solid #8C8578;border-right-width:2px"></div>
<div style="left:1235px;top:796px;width:18px;height:18px;background:#ECE6DB;border:1px solid #8C8578;border-right-width:2px;border-bottom-width:2px"></div>
<div class="t" style="left:971px;top:477px;font:bold 13.5px 'Liberation Sans';line-height:16px">Основание задачи:</div>
<div class="t" style="left:986px;top:497px;font:12.7px 'Liberation Sans';line-height:16px;color:#0000FF;text-decoration:underline">Заявка клиента 00000006387 от<br>09.07.2009 16:51:07</div>
<div style="left:0px;top:854px;width:1263px;height:2px;background:#F6F3EB"></div>
<div style="left:-1px;top:856px;width:162px;height:20px;background:#DDDDDD;border:1px solid #747068;border-bottom:none"></div>
<div class="t" style="left:10px;top:860px;">Рабочее место менеджере ...</div>
<div style="left:163px;top:856px;width:173px;height:20px;background:#D6DEF3;border:1px solid #747068;border-bottom:none"></div>
<div class="t" style="left:183px;top:860px;">Заявка туриста</div>
<div style="left:12px;top:151px;width:904px;height:703px;background:#D5DFF5;border:1px solid #9AA8C6;border-left-color:#C4D0EA;border-top-color:#E8EEFA"></div>
<div style="left:13px;top:152px;width:902px;height:20px;background:linear-gradient(90deg,#CCD7EF,#D9E1F3)"></div>
<svg style="left:19px;top:154px" width="12" height="14" viewBox="0 0 12 14"><rect x="0.5" y="0.5" width="11" height="13" fill="#fff" stroke="#A4A4AC"/><path d="M2 2.500H10" stroke="#2A4A9A" stroke-width="1.400"/><path d="M6 5.500H9.500M6.500 7.500H9.500M6 9.500H9.500" stroke="#8C98E0" stroke-width=".9"/><path d="M2.500 5.500h1" stroke="#8C98E0" stroke-width=".9"/><path d="M4.200 6L6.300 8.700L4.200 11.400L2.100 8.700Z" fill="none" stroke="#2A4A9A" stroke-width="1" stroke-dasharray="1.200 .5"/></svg>
<div class="t" style="left:36px;top:156px;font:bold 12.2px 'Liberation Sans';line-height:15px;color:#08086E">Заявка туриста</div>
<div style="left:858px;top:166px;width:8px;height:2px;background:#04045E"></div>
<div style="left:876px;top:157px;width:11px;height:11px;border:1px solid #04045E;border-top:2px solid #04045E"></div>
<svg style="left:898px;top:158px" width="10" height="10" viewBox="0 0 10 10"><path d="M1 1.200L9 8.800M9 1.200L1 8.800" stroke="#04045E" stroke-width="2.100"/></svg>
<div style="left:14px;top:172px;width:899px;height:679px;background:#FFFBF0;border:1px solid #8E8E8E"></div>
<div style="left:15px;top:173px;width:897px;height:25px;background:#ECE6DB;border-bottom:1px solid #8A8376"></div>
<div class="t" style="left:19px;top:178px;letter-spacing:-.12px">Цены и валюта...</div>
<div style="left:113px;top:176px;width:1px;height:19px;background:#BDB8A8"></div>
<div class="t" style="left:119px;top:178px;">Действия</div>
<svg style="left:173px;top:184px" width="5" height="3" viewBox="0 0 5 3"><path d="M0 0H5L2.5 3Z" fill="#000"/></svg>
<div style="left:184px;top:176px;width:1px;height:19px;background:#BDB8A8"></div>
<svg style="left:190px;top:176px" width="17" height="17" viewBox="0 0 17 17"><rect x="0.5" y="1.5" width="11" height="14" fill="#fff" stroke="#B4B4BC"/><path d="M2 3v12" stroke="#4A6AE0" stroke-width="1.2" stroke-dasharray="1 1"/><path d="M4 4.5h6M4 6.5h6M4 8.5h2M4 10.5h2M4 12.5h6" stroke="#C8CCDA"/><path d="M16.5 10H9" stroke="#2424CC" stroke-width="3"/><path d="M5.5 10L10.3 5.6V14.4Z" fill="#2424CC"/></svg>
<div style="left:212px;top:176px;width:1px;height:19px;background:#BDB8A8"></div>
<svg style="left:217px;top:178px" width="16" height="13" viewBox="0 0 16 13"><rect x="0.5" y="0.5" width="14" height="11.5" fill="#fff" stroke="#8C8C9C"/><rect x="1" y="1" width="13" height="2" fill="#5AA8E8"/><rect x="0.6" y="0.6" width="1.6" height="1.6" fill="#30B040"/><path d="M5 9.5A3 3 0 1 1 8.5 5" stroke="#2A3AC8" fill="none" stroke-width="1.5"/><path d="M9.8 5A3 3 0 1 1 6.5 9.8" stroke="#D01818" fill="none" stroke-width="1.5" transform="translate(1.2 .6)"/><path d="M7.2 3.6L9.6 5.4L7 6.6Z" fill="#2A3AC8"/><path d="M6.2 9L8.8 9.4L7.4 11.6Z" fill="#B01010"/></svg>
<svg style="left:240px;top:176px" width="18" height="17" viewBox="0 0 18 17"><path d="M1.5 1.5H7.5L10.5 4.5V13.5H1.5Z" fill="#fff" stroke="#9C9CA8"/><path d="M7.5 1.5V4.5H10.5" fill="none" stroke="#9C9CA8"/><path d="M7.5 4.5H13.5L16.5 7.5V16.500H7.5Z" fill="#F4F6FC" stroke="#9C9CA8"/><path d="M13.500 4.500V7.500H16.500" fill="none" stroke="#9C9CA8"/><path d="M3 7Q5 10.500 10 10.500" stroke="#2A3AC8" stroke-width="2.6" fill="none"/><path d="M9.500 6.600L14.500 10.500L9.500 14.400Z" fill="#2A3AC8"/></svg>
<div style="left:263px;top:176px;width:1px;height:19px;background:#BDB8A8"></div>
<svg style="left:268px;top:176px" width="18" height="17" viewBox="0 0 18 17"><rect x="1.5" y="1.5" width="10" height="13" fill="#fff" stroke="#A4A4B0"/><path d="M3 4.500h6M3 6.500h6M3 8.500h3" stroke="#CACEDC"/><path d="M4.500 9.500l-1.800 2h3.600z" fill="#A8A8F0"/><path d="M5 7Q6 2.500 10 3.500Q13.500 4.500 13.500 8" stroke="#141C9C" stroke-width="2.400" fill="none"/><path d="M10 7.500H17L13.500 11.300Z" fill="#141C9C"/><rect x="8.500" y="10.500" width="8" height="6" fill="#F2EE3A" stroke="#8C8C28"/><path d="M9 12.500h7M9 14.500h7" stroke="#8C8C28"/></svg>
<svg style="left:291px;top:176px" width="18" height="17" viewBox="0 0 18 17"><rect x="1.500" y="1.500" width="10" height="13" fill="#fff" stroke="#A4A4B0"/><path d="M3 4.500h6M3 6.500h6M3 8.500h6" stroke="#CACEDC"/><path d="M4.500 9.500l-1.800 2h3.600z" fill="#A8A8F0"/><rect x="8.500" y="10.500" width="8" height="6" fill="#F2EE3A" stroke="#8C8C28"/><path d="M9 12.500h7M9 14.500h7" stroke="#8C8C28"/><path d="M10.500 5.500L16.500 12.500M16.500 5.500L10.500 12.500" stroke="#F01010" stroke-width="1.500"/></svg>
<div style="left:314px;top:176px;width:1px;height:19px;background:#BDB8A8"></div>
<svg style="left:319px;top:176px" width="18" height="17" viewBox="0 0 18 17"><path d="M1.500 1.500H6.500L9.500 4.500V13.500H1.500Z" fill="#38A4F4" stroke="#2A7AC8"/><path d="M7.500 4.500H13.500L16.500 7.500V16.500H7.500Z" fill="#fff" stroke="#9C9CA8"/><path d="M13.500 4.500V7.500H16.500" fill="none" stroke="#9C9CA8"/><path d="M3 7Q5 10.500 10 10.500" stroke="#2A3AC8" stroke-width="2.600" fill="none"/><path d="M9.500 6.600L14.500 10.500L9.500 14.400Z" fill="#2A3AC8"/></svg>
<svg style="left:338px;top:184px" width="5" height="3" viewBox="0 0 5 3"><path d="M0 0H5L2.5 3Z" fill="#000"/></svg>
<div style="left:349px;top:176px;width:1px;height:19px;background:#BDB8A8"></div>
<div class="t" style="left:355px;top:178px;">Перейти</div>
<svg style="left:401px;top:184px" width="5" height="3" viewBox="0 0 5 3"><path d="M0 0H5L2.5 3Z" fill="#000"/></svg>
<div style="left:413px;top:176px;width:1px;height:19px;background:#BDB8A8"></div>
<svg style="left:419px;top:177px" width="17" height="17" viewBox="0 0 17 17"><path d="M4 0.5H13L16.500 4V13L13 16.500H4L0.500 13V4Z" fill="#FFFFD2" stroke="#B4B09C"/><text x="8.5" y="13.5" text-anchor="middle" font-family="Liberation Sans" font-weight="bold" font-size="13" fill="#1030C0">?</text></svg>
<svg style="left:442px;top:177px" width="17" height="16" viewBox="0 0 17 16"><rect x="0.5" y="0.5" width="15" height="14.500" fill="#fff" stroke="#8E8E8E"/><path d="M0.500 5.300H15.500M0.500 10.200H15.500" stroke="#8E8E8E"/><path d="M11.500 0.500V15" stroke="#C8C8C8"/><rect x="12" y="1" width="3.500" height="14" fill="#E4E2DA"/><rect x="12.800" y="2" width="2" height="2" fill="#222"/><rect x="12.800" y="6.800" width="2" height="2" fill="#222"/><rect x="12.800" y="11.700" width="2" height="2" fill="#222"/><path d="M0.500 5.300H15.500M0.500 10.200H15.500" stroke="#8E8E8E"/></svg>
<svg style="left:465px;top:178px" width="17" height="14" viewBox="0 0 17 14"><rect x="0.5" y="0.5" width="5" height="5" fill="#fff" stroke="#8A8A8A"/><path d="M1.5 2.8L2.8 4.300L4.800 1.300" stroke="#000" fill="none" stroke-width="1.100"/><rect x="0.500" y="8.500" width="5" height="5" fill="#fff" stroke="#8A8A8A"/><path d="M8 1.300h8M8 9.300h8" stroke="#2A62E0" stroke-width="1.800"/><path d="M8 4.500h4.500M8 12.500h4.500" stroke="#2A62E0" stroke-width="1.600"/></svg>
<div style="left:487px;top:176px;width:1px;height:19px;background:#BDB8A8"></div>
<svg style="left:494px;top:176px" width="15" height="18" viewBox="0 0 15 18"><ellipse cx="7.500" cy="2.800" rx="3.400" ry="2" fill="#F0C040" stroke="#C89018" stroke-width=".6"/><path d="M3 14l-1.300 2M12 14l1.300 2" stroke="#8890A8" stroke-width="1.300"/><circle cx="7.500" cy="9.800" r="5.900" fill="#9AA4BC"/><circle cx="7.500" cy="9.800" r="4.200" fill="#EEF2FA" stroke="#C8D0E0" stroke-width=".6"/><path d="M7.500 6.800V10.100L9.800 11.100" stroke="#3050C0" fill="none" stroke-width="1.100"/></svg>
<div style="left:515px;top:176px;width:1px;height:19px;background:#BDB8A8"></div>
<div class="t" style="left:522px;top:178px;">Файлы</div>
<div style="left:566px;top:176px;width:1px;height:19px;background:#BDB8A8"></div>
<svg style="left:571px;top:176px" width="18" height="18" viewBox="0 0 18 18"><rect x="5.5" y="3.500" width="8" height="11" fill="#D4FAFF" stroke="#74747C"/><path d="M7.500 6.500h4M7.500 12.500h4" stroke="#A8B4F0"/><rect x="1" y="1" width="6" height="4" fill="#10B028"/><path d="M1 5H5.500L9.800 9.300L8.800 10.600L5.800 8.200L5.200 12.200L3.600 12L2.200 8Z" fill="#F0B820" stroke="#A87808" stroke-width=".5"/><path d="M14.200 4.500L16 6V12.500L15.200 14H12.800L12 11L9.800 8.600L10.800 7.600L13 9.600Z" fill="#F0B820" stroke="#A87808" stroke-width=".5"/><rect x="11" y="14" width="6.200" height="3" rx="1" fill="#1414E0"/><rect x="12.300" y="15.200" width="3.600" height="1.800" fill="#20E4F4"/></svg>
<div class="t" style="left:23px;top:208px;">Номер:</div>
<div style="left:105px;top:205px;width:80px;height:19px;background:#fff;border:1px solid #8A8376;box-sizing:border-box;"><span class="ft" style="">00000006701</span></div>
<div class="t" style="left:188px;top:208px;">от:</div>
<div style="left:205px;top:205px;width:106px;height:19px;background:#fff;border:1px solid #8A8376;box-sizing:border-box;background:#FEFEFA;border-color:#D2CDBF"><span class="ft" style="color:#8C8C8C">03.08.2009 11:29:00</span></div>
<div style="left:310px;top:205px;width:15px;height:19px;background:#ECE6DB;border:1px solid #D2CDBF"></div>
<svg style="left:313px;top:210px" width="9" height="9" viewBox="0 0 9 9"><g shape-rendering="crispEdges"><rect x="0" y="0" width="9" height="9" fill="#707070"/><rect x="1" y="2" width="7" height="6" fill="#fff"/><rect x="4" y="0" width="1" height="1" fill="#fff"/><rect x="3" y="2" width="1" height="6" fill="#707070"/><rect x="6" y="2" width="1" height="6" fill="#707070" opacity=".4"/><rect x="3" y="2" width="1" height="6" fill="#fff" opacity=".6"/><rect x="1" y="4" width="7" height="1" fill="#707070" opacity=".45"/><rect x="1" y="6" width="7" height="1" fill="#707070" opacity=".45"/></g></svg>
<div class="t" style="left:570px;top:208px;">Состояние заявки:</div>
<div style="left:671px;top:205px;width:205px;height:19px;background:#fff;border:1px solid #8A8376;box-sizing:border-box;"><span class="ft" style="">Кредит</span></div>
<div class="b" style="left:875px;top:205px;width:15px;height:19px;background:#ECE6DB;border:1px solid #8A8376;box-sizing:border-box;"><svg style="left:3px;top:10px" width="9" height="3"><rect x="0.400" y="0.300" width="1.300" height="1.700" fill="#111"/><rect x="3.600" y="0.300" width="1.300" height="1.700" fill="#111"/><rect x="6.800" y="0.300" width="1.300" height="1.700" fill="#111"/></svg></div>
<div class="b" style="left:889px;top:205px;width:15px;height:19px;background:#ECE6DB;border:1px solid #8A8376;box-sizing:border-box;"><svg style="left:3px;top:6px" width="8" height="7"><path d="M0.800 0.600L7 6.400M7 0.600L0.800 6.400" stroke="#000" stroke-width="1.550"/></svg></div>
<div class="t" style="left:23px;top:230px;">Клиент:</div>
<div style="left:105px;top:227px;width:220px;height:19px;background:#fff;border:1px solid #8A8376;box-sizing:border-box;"><span class="ft" style="letter-spacing:.2px">Кудряшова Татьяна Т/Ф&quot;Руска&quot;</span></div>
<div class="b" style="left:324px;top:227px;width:14px;height:19px;background:#ECE6DB;border:1px solid #8A8376;box-sizing:border-box;"><svg style="left:3px;top:10px" width="9" height="3"><rect x="0.400" y="0.300" width="1.300" height="1.700" fill="#111"/><rect x="3.600" y="0.300" width="1.300" height="1.700" fill="#111"/><rect x="6.800" y="0.300" width="1.300" height="1.700" fill="#111"/></svg></div>
<div class="b" style="left:337px;top:227px;width:15px;height:19px;background:#ECE6DB;border:1px solid #8A8376;box-sizing:border-box;"><svg style="left:2px;top:3px" width="11" height="11"><circle cx="4" cy="4" r="3" fill="#fff" stroke="#000" stroke-width="1.2"/><path d="M6.3 6.3L9.5 9.5" stroke="#000" stroke-width="2"/></svg></div>
<div class="t" style="left:362px;top:230px;">Договор:</div>
<div style="left:423px;top:227px;width:171px;height:19px;background:#fff;border:1px solid #8A8376;box-sizing:border-box;"><span class="ft" style="">№ 0308/09-6 540 от 03.08.2009</span></div>
<div class="b" style="left:593px;top:227px;width:14px;height:19px;background:#ECE6DB;border:1px solid #8A8376;box-sizing:border-box;"><svg style="left:2px;top:1px" width="10" height="15"><rect x="0.5" y="0.5" width="9" height="14" fill="#fff" stroke="#C8B8A0"/><path d="M2 3H8M2 5.5H8M2 8H8M2 10.5H8" stroke="#A0B0D8" stroke-width=".8"/><rect x="0" y="13" width="10" height="2" fill="#D08040"/></svg></div>
<div class="b" style="left:606px;top:227px;width:16px;height:19px;background:#ECE6DB;border:1px solid #8A8376;box-sizing:border-box;"><svg style="left:2px;top:3px" width="11" height="11"><circle cx="4" cy="4" r="3" fill="#fff" stroke="#000" stroke-width="1.2"/><path d="M6.3 6.3L9.5 9.5" stroke="#000" stroke-width="2"/></svg></div>
<div class="t" style="left:755px;top:230px;">Оплата:</div>
<div style="left:811px;top:227px;width:78px;height:19px;background:#fff;border:1px solid #8A8376;box-sizing:border-box;"><span class="ft" style="">05.08.2009</span></div>
<div class="b" style="left:888px;top:227px;width:15px;height:19px;background:#ECE6DB;border:1px solid #8A8376;box-sizing:border-box;"></div>
<svg style="left:891px;top:232px" width="9" height="9" viewBox="0 0 9 9"><g shape-rendering="crispEdges"><rect x="0" y="0" width="9" height="9" fill="#000"/><rect x="1" y="2" width="7" height="6" fill="#fff"/><rect x="4" y="0" width="1" height="1" fill="#fff"/><rect x="3" y="2" width="1" height="6" fill="#000"/><rect x="6" y="2" width="1" height="6" fill="#000" opacity=".4"/><rect x="3" y="2" width="1" height="6" fill="#fff" opacity=".6"/><rect x="1" y="4" width="7" height="1" fill="#000" opacity=".45"/><rect x="1" y="6" width="7" height="1" fill="#000" opacity=".45"/></g></svg>
<div style="left:23px;top:257px;width:427px;height:116px;border:1px solid #8C8578;border-radius:3px"></div>
<div class="t" style="left:33px;top:249px;background:#FFFBF0;padding:0 2px;font-weight:bold;color:#8E887C;font-size:11.5px;letter-spacing:.3px">Туристы</div>
<svg style="left:41px;top:269px" width="16" height="16" viewBox="0 0 16 16"><g shape-rendering="crispEdges"><rect x="6" y="1" width="10" height="3" fill="#CDCDF8"/><rect x="7" y="2" width="8" height="1" fill="#E8E8FB"/><rect x="6" y="3" width="10" height="1" fill="#9C9CDC"/><rect x="15" y="1" width="1" height="3" fill="#9C9CDC"/><rect x="6" y="4" width="10" height="3" fill="#CDCDF8"/><rect x="7" y="5" width="8" height="1" fill="#E8E8FB"/><rect x="6" y="6" width="10" height="1" fill="#9C9CDC"/><rect x="15" y="4" width="1" height="3" fill="#9C9CDC"/><rect x="3" y="7" width="10" height="3" fill="#8C98D0"/><rect x="4" y="8" width="8" height="1" fill="#F4F4FC"/><rect x="3" y="9" width="10" height="1" fill="#1E4E8E"/><rect x="12" y="7" width="1" height="3" fill="#1E4E8E"/><rect x="6" y="10" width="10" height="3" fill="#CDCDF8"/><rect x="7" y="11" width="8" height="1" fill="#E8E8FB"/><rect x="6" y="12" width="10" height="1" fill="#9C9CDC"/><rect x="15" y="10" width="1" height="3" fill="#9C9CDC"/><rect x="6" y="13" width="10" height="3" fill="#CDCDF8"/><rect x="7" y="14" width="8" height="1" fill="#E8E8FB"/><rect x="6" y="15" width="10" height="1" fill="#9C9CDC"/><rect x="15" y="13" width="1" height="3" fill="#9C9CDC"/></g><path d="M3.5 0V7M0 3.5H7M1.1 1.100L5.900 5.900M5.900 1.100L1.100 5.900" stroke="#FFD400" stroke-width="1.300"/><circle cx="3.500" cy="3.500" r="2.200" fill="#FFD400"/><circle cx="3.500" cy="3.500" r="1" fill="#fff"/></svg>
<svg style="left:64px;top:269px" width="17" height="16" viewBox="0 0 17 16"><g shape-rendering="crispEdges"><rect x="6" y="1" width="10" height="3" fill="#C4C4DC"/><rect x="7" y="2" width="8" height="1" fill="#D4D4DC"/><rect x="6" y="3" width="10" height="1" fill="#A8A8CC"/><rect x="15" y="1" width="1" height="3" fill="#A8A8CC"/><rect x="6" y="4" width="10" height="3" fill="#C4C4DC"/><rect x="7" y="5" width="8" height="1" fill="#D4D4DC"/><rect x="6" y="6" width="10" height="1" fill="#A8A8CC"/><rect x="15" y="4" width="1" height="3" fill="#A8A8CC"/><rect x="3" y="7" width="10" height="3" fill="#B0B4CC"/><rect x="4" y="8" width="8" height="1" fill="#C8C8D4"/><rect x="3" y="9" width="10" height="1" fill="#8C9CA4"/><rect x="12" y="7" width="1" height="3" fill="#8C9CA4"/><rect x="6" y="10" width="10" height="3" fill="#C4C4DC"/><rect x="7" y="11" width="8" height="1" fill="#D4D4DC"/><rect x="6" y="12" width="10" height="1" fill="#A8A8CC"/><rect x="15" y="10" width="1" height="3" fill="#A8A8CC"/><rect x="6" y="13" width="10" height="3" fill="#C4C4DC"/><rect x="7" y="14" width="8" height="1" fill="#D4D4DC"/><rect x="6" y="15" width="10" height="1" fill="#A8A8CC"/><rect x="15" y="13" width="1" height="3" fill="#A8A8CC"/></g><path d="M0.700 0.700 L6.300 6.300 M6.300 0.700 L0.700 6.300" stroke="#AC9E9C" stroke-width="1.700"/></svg>
<div class="t" style="left:88px;top:270px;">Заполнить</div>
<div style="left:217px;top:264px;width:3px;height:25px;border:1px solid #8A8376;background:#fff"></div>
<div class="t" style="left:227px;top:267px;">Всего:</div>
<div style="left:273px;top:267px;width:27px;height:18px;background:#fff;border:1px solid #8A8376;box-sizing:border-box;"><span class="ft" style="left:auto;right:3px">2</span></div>
<div class="t" style="left:303px;top:269px;">в.т.ч. дети:</div>
<div style="left:363px;top:267px;width:21px;height:18px;background:#fff;border:1px solid #8A8376;box-sizing:border-box;"><span class="ft" style="left:7px">0</span></div>
<div style="left:388px;top:267px;width:57px;height:18px;background:#fff;border:1px solid #8A8376;box-sizing:border-box;"></div>
<div style="left:29px;top:294px;width:416px;height:71px;background:#fff;border:1px solid #8E887C"></div>
<div style="left:29px;top:294px;width:416px;height:16px;background:#EBE5DA;border:1px solid #8E887C"></div>
<div style="left:30px;top:295px;width:28px;height:14px;background:#C8C0B3"></div>
<div style="left:58px;top:294px;width:1px;height:16px;background:#8E887C"></div>
<div class="t" style="left:32px;top:295px;">N</div>
<div class="t" style="left:61px;top:295px;">Туристы</div>
<div style="left:457px;top:257px;width:447px;height:96px;border:1px solid #8C8578;border-radius:3px"></div>
<div class="t" style="left:465px;top:249px;background:#FFFBF0;padding:0 2px;font-weight:bold;color:#8E887C;font-size:11.5px;letter-spacing:.3px">Общая информация о поездке</div>
<div class="t" style="left:467px;top:269px;">Источник информации:</div>
<div style="left:594px;top:266px;width:265px;height:19px;background:#fff;border:1px solid #8A8376;box-sizing:border-box;"></div>
<div class="b" style="left:858px;top:266px;width:14px;height:19px;background:#ECE6DB;border:1px solid #8A8376;box-sizing:border-box;"><svg style="left:3px;top:10px" width="9" height="3"><rect x="0.400" y="0.300" width="1.300" height="1.700" fill="#111"/><rect x="3.600" y="0.300" width="1.300" height="1.700" fill="#111"/><rect x="6.800" y="0.300" width="1.300" height="1.700" fill="#111"/></svg></div>
<div class="b" style="left:871px;top:266px;width:15px;height:19px;background:#ECE6DB;border:1px solid #8A8376;box-sizing:border-box;"><svg style="left:3px;top:6px" width="8" height="7"><path d="M0.800 0.600L7 6.400M7 0.600L0.800 6.400" stroke="#000" stroke-width="1.550"/></svg></div>
<div class="t" style="left:467px;top:290px;">Цель поездки:</div>
<div style="left:594px;top:287px;width:265px;height:19px;background:#fff;border:1px solid #8A8376;box-sizing:border-box;"></div>
<div class="b" style="left:858px;top:287px;width:14px;height:19px;background:#ECE6DB;border:1px solid #8A8376;box-sizing:border-box;"><svg style="left:3px;top:10px" width="9" height="3"><rect x="0.400" y="0.300" width="1.300" height="1.700" fill="#111"/><rect x="3.600" y="0.300" width="1.300" height="1.700" fill="#111"/><rect x="6.800" y="0.300" width="1.300" height="1.700" fill="#111"/></svg></div>
<div class="b" style="left:871px;top:287px;width:15px;height:19px;background:#ECE6DB;border:1px solid #8A8376;box-sizing:border-box;"><svg style="left:3px;top:6px" width="8" height="7"><path d="M0.800 0.600L7 6.400M7 0.600L0.800 6.400" stroke="#000" stroke-width="1.550"/></svg></div>
<div class="t" style="left:467px;top:312px;">Общий срок поездки с:</div>
<div style="left:592px;top:309px;width:71px;height:19px;background:#fff;border:1px solid #8A8376;box-sizing:border-box;"><span class="ft" style="">01.08.2009</span></div>
<div class="b" style="left:662px;top:309px;width:15px;height:19px;background:#ECE6DB;border:1px solid #8A8376;box-sizing:border-box;"></div>
<svg style="left:665px;top:314px" width="9" height="9" viewBox="0 0 9 9"><g shape-rendering="crispEdges"><rect x="0" y="0" width="9" height="9" fill="#000"/><rect x="1" y="2" width="7" height="6" fill="#fff"/><rect x="4" y="0" width="1" height="1" fill="#fff"/><rect x="3" y="2" width="1" height="6" fill="#000"/><rect x="6" y="2" width="1" height="6" fill="#000" opacity=".4"/><rect x="3" y="2" width="1" height="6" fill="#fff" opacity=".6"/><rect x="1" y="4" width="7" height="1" fill="#000" opacity=".45"/><rect x="1" y="6" width="7" height="1" fill="#000" opacity=".45"/></g></svg>
<div class="t" style="left:682px;top:312px;">по:</div>
<div style="left:718px;top:309px;width:70px;height:19px;background:#fff;border:1px solid #8A8376;box-sizing:border-box;"><span class="ft" style="">02.08.2009</span></div>
<div class="b" style="left:787px;top:309px;width:15px;height:19px;background:#ECE6DB;border:1px solid #8A8376;box-sizing:border-box;"></div>
<svg style="left:790px;top:314px" width="9" height="9" viewBox="0 0 9 9"><g shape-rendering="crispEdges"><rect x="0" y="0" width="9" height="9" fill="#000"/><rect x="1" y="2" width="7" height="6" fill="#fff"/><rect x="4" y="0" width="1" height="1" fill="#fff"/><rect x="3" y="2" width="1" height="6" fill="#000"/><rect x="6" y="2" width="1" height="6" fill="#000" opacity=".4"/><rect x="3" y="2" width="1" height="6" fill="#fff" opacity=".6"/><rect x="1" y="4" width="7" height="1" fill="#000" opacity=".45"/><rect x="1" y="6" width="7" height="1" fill="#000" opacity=".45"/></g></svg>
<div class="t" style="left:467px;top:334px;">Количество дней:</div>
<div style="left:592px;top:332px;width:26px;height:18px;background:#fff;border:1px solid #8A8376;box-sizing:border-box;"><span class="ft" style="left:auto;right:4px">2</span></div>
<div class="t" style="left:633px;top:334px;">Количество ночей:</div>
<div style="left:739px;top:332px;width:24px;height:18px;background:#fff;border:1px solid #8A8376;box-sizing:border-box;"><span class="ft" style="left:auto;right:5px">1</span></div>
<div class="t" style="left:461px;top:360px;">Поставщик:</div>
<div style="left:529px;top:357px;width:202px;height:19px;background:#fff;border:1px solid #8A8376;box-sizing:border-box;"></div>
<div class="b" style="left:730px;top:357px;width:14px;height:19px;background:#ECE6DB;border:1px solid #8A8376;box-sizing:border-box;"><svg style="left:3px;top:10px" width="9" height="3"><rect x="0.400" y="0.300" width="1.300" height="1.700" fill="#111"/><rect x="3.600" y="0.300" width="1.300" height="1.700" fill="#111"/><rect x="6.800" y="0.300" width="1.300" height="1.700" fill="#111"/></svg></div>
<div class="b" style="left:743px;top:357px;width:14px;height:19px;background:#ECE6DB;border:1px solid #8A8376;box-sizing:border-box;"><svg style="left:3px;top:6px" width="8" height="7"><path d="M0.800 0.600L7 6.400M7 0.600L0.800 6.400" stroke="#000" stroke-width="1.550"/></svg></div>
<div class="t" style="left:762px;top:360px;">Дата опл.</div>
<div style="left:830px;top:357px;width:61px;height:19px;background:#fff;border:1px solid #8A8376;box-sizing:border-box;"><span class="ft" style="left:8px;letter-spacing:3px">. .</span></div>
<div class="b" style="left:890px;top:357px;width:14px;height:19px;background:#ECE6DB;border:1px solid #8A8376;box-sizing:border-box;"></div>
<svg style="left:893px;top:362px" width="9" height="9" viewBox="0 0 9 9"><g shape-rendering="crispEdges"><rect x="0" y="0" width="9" height="9" fill="#000"/><rect x="1" y="2" width="7" height="6" fill="#fff"/><rect x="4" y="0" width="1" height="1" fill="#fff"/><rect x="3" y="2" width="1" height="6" fill="#000"/><rect x="6" y="2" width="1" height="6" fill="#000" opacity=".4"/><rect x="3" y="2" width="1" height="6" fill="#fff" opacity=".6"/><rect x="1" y="4" width="7" height="1" fill="#000" opacity=".45"/><rect x="1" y="6" width="7" height="1" fill="#000" opacity=".45"/></g></svg>
<div style="left:23px;top:402px;width:881px;height:363px;border:1px solid #8C8578"></div>
<div style="left:123px;top:382px;width:103px;height:21px;background:linear-gradient(#F6F2E9,#F1ECE2);border:1px solid #B4AEA0;border-bottom:1px solid #8C8578;"></div>
<div class="t" style="left:146px;top:386px;">Мероприятия</div>
<div style="left:225px;top:382px;width:89px;height:21px;background:linear-gradient(#F6F2E9,#F1ECE2);border:1px solid #B4AEA0;border-bottom:1px solid #8C8578;"></div>
<div class="t" style="left:249px;top:386px;">Транспорт</div>
<div style="left:313px;top:382px;width:110px;height:21px;background:linear-gradient(#F6F2E9,#F1ECE2);border:1px solid #B4AEA0;border-bottom:1px solid #8C8578;"></div>
<div class="t" style="left:337px;top:386px;">Услуги фирмы</div>
<div style="left:422px;top:382px;width:53px;height:21px;background:linear-gradient(#F6F2E9,#F1ECE2);border:1px solid #B4AEA0;border-bottom:1px solid #8C8578;"></div>
<div class="t" style="left:427px;top:386px;">Оплаты</div>
<div style="left:474px;top:382px;width:135px;height:21px;background:linear-gradient(#F6F2E9,#F1ECE2);border:1px solid #B4AEA0;border-bottom:1px solid #8C8578;"></div>
<div class="t" style="left:479px;top:386px;">Автоматические скидки</div>
<div style="left:23px;top:381px;width:101px;height:22px;background:#FFFBF0;border:1px solid #8C8578;border-bottom:none;border-radius:2px 2px 0 0"></div>
<div class="t" style="left:47px;top:386px;">Размещение</div>
<svg style="left:28px;top:383px" width="18" height="18" viewBox="0 0 18 18"><rect x="11.3" y="1.2" width="2.2" height="4.5" fill="#C8A080" stroke="#402010" stroke-width=".6"/><path d="M3 8.8V16H14V8.8L8.5 3.4Z" fill="#F3E4C6" stroke="#B09070" stroke-width=".6"/><path d="M0.8 8.7L8.5 1.2L16.3 8.7" fill="none" stroke="#1A0A0A" stroke-width="1.7"/><rect x="7" y="5.6" width="3" height="3" fill="#A8C8F0" stroke="#6080B0" stroke-width=".5"/><rect x="6.8" y="10.8" width="3.6" height="5.2" fill="#C08040" stroke="#804010" stroke-width=".5"/><path d="M0.5 16.6H16.8" stroke="#101010" stroke-width="1.3"/></svg>
<svg style="left:129px;top:384px" width="17" height="17" viewBox="0 0 17 17"><rect x="-1.9" y="-8.3" width="3.8" height="4" fill="#F08C14" stroke="#C86A08" stroke-width=".5" transform="translate(8.5 8.5) rotate(0)"/><rect x="-1.9" y="-8.3" width="3.8" height="4" fill="#F08C14" stroke="#C86A08" stroke-width=".5" transform="translate(8.5 8.5) rotate(45)"/><rect x="-1.9" y="-8.3" width="3.8" height="4" fill="#F08C14" stroke="#C86A08" stroke-width=".5" transform="translate(8.5 8.5) rotate(90)"/><rect x="-1.9" y="-8.3" width="3.8" height="4" fill="#F08C14" stroke="#C86A08" stroke-width=".5" transform="translate(8.5 8.5) rotate(135)"/><rect x="-1.9" y="-8.3" width="3.8" height="4" fill="#F08C14" stroke="#C86A08" stroke-width=".5" transform="translate(8.5 8.5) rotate(180)"/><rect x="-1.9" y="-8.3" width="3.8" height="4" fill="#F08C14" stroke="#C86A08" stroke-width=".5" transform="translate(8.5 8.5) rotate(225)"/><rect x="-1.9" y="-8.3" width="3.8" height="4" fill="#F08C14" stroke="#C86A08" stroke-width=".5" transform="translate(8.5 8.5) rotate(270)"/><rect x="-1.9" y="-8.3" width="3.8" height="4" fill="#F08C14" stroke="#C86A08" stroke-width=".5" transform="translate(8.5 8.5) rotate(315)"/><circle cx="8.5" cy="8.5" r="6.4" fill="#F08C14"/><circle cx="8.5" cy="8.5" r="4.9" fill="#FFE448" stroke="#E0A010" stroke-width=".6"/><circle cx="6.8" cy="7.3" r=".9" fill="#3A5AB0"/><circle cx="10.2" cy="7.3" r=".9" fill="#3A5AB0"/><path d="M5.8 9.6Q8.5 13 11.2 9.6Z" fill="#fff" stroke="#B06010" stroke-width=".5"/></svg>
<svg style="left:230px;top:384px" width="17" height="17" viewBox="0 0 17 17"><rect x="0.5" y="0.5" width="16" height="16" rx="3" fill="#F0501A" stroke="#B03008"/><path d="M2.5 8.5H9L6 3.5H7.5L11.5 8.5H14Q15.5 8.5 15.5 9.2Q15.5 10 14 10H11.5L7.5 14.5H6L9 10H4.5L3.5 11.5H2.5L3.2 9.2Z" fill="#fff"/></svg>
<svg style="left:319px;top:385px" width="17" height="16" viewBox="0 0 17 16"><path d="M7.500 0.800H6Q1 2.500 1 7.500V11.700H3.800V7Q4 3.500 7.500 3Z" fill="#F26A12"/><path d="M4.300 4.800L8.800 0.800V4.800Z" fill="#F0C010"/><ellipse cx="7" cy="7.300" rx="3.100" ry="1.400" fill="#FFF030" stroke="#8C5C08" stroke-width=".8"/><ellipse cx="7" cy="10.200" rx="3.100" ry="1.400" fill="#FFF030" stroke="#8C5C08" stroke-width=".8"/><ellipse cx="7" cy="13.200" rx="3.100" ry="1.400" fill="#FFF030" stroke="#8C5C08" stroke-width=".8"/><ellipse cx="13.300" cy="13.200" rx="2.800" ry="1.400" fill="#FFF030" stroke="#8C5C08" stroke-width=".8"/></svg>
<svg style="left:34px;top:407px" width="16" height="16" viewBox="0 0 16 16"><g shape-rendering="crispEdges"><rect x="6" y="1" width="10" height="3" fill="#CDCDF8"/><rect x="7" y="2" width="8" height="1" fill="#E8E8FB"/><rect x="6" y="3" width="10" height="1" fill="#9C9CDC"/><rect x="15" y="1" width="1" height="3" fill="#9C9CDC"/><rect x="6" y="4" width="10" height="3" fill="#CDCDF8"/><rect x="7" y="5" width="8" height="1" fill="#E8E8FB"/><rect x="6" y="6" width="10" height="1" fill="#9C9CDC"/><rect x="15" y="4" width="1" height="3" fill="#9C9CDC"/><rect x="3" y="7" width="10" height="3" fill="#8C98D0"/><rect x="4" y="8" width="8" height="1" fill="#F4F4FC"/><rect x="3" y="9" width="10" height="1" fill="#1E4E8E"/><rect x="12" y="7" width="1" height="3" fill="#1E4E8E"/><rect x="6" y="10" width="10" height="3" fill="#CDCDF8"/><rect x="7" y="11" width="8" height="1" fill="#E8E8FB"/><rect x="6" y="12" width="10" height="1" fill="#9C9CDC"/><rect x="15" y="10" width="1" height="3" fill="#9C9CDC"/><rect x="6" y="13" width="10" height="3" fill="#CDCDF8"/><rect x="7" y="14" width="8" height="1" fill="#E8E8FB"/><rect x="6" y="15" width="10" height="1" fill="#9C9CDC"/><rect x="15" y="13" width="1" height="3" fill="#9C9CDC"/></g><path d="M3.5 0V7M0 3.5H7M1.1 1.100L5.900 5.900M5.900 1.100L1.100 5.900" stroke="#FFD400" stroke-width="1.300"/><circle cx="3.500" cy="3.500" r="2.200" fill="#FFD400"/><circle cx="3.500" cy="3.500" r="1" fill="#fff"/></svg>
<svg style="left:57px;top:407px" width="16" height="16" viewBox="0 0 16 16"><g shape-rendering="crispEdges"><rect x="6" y="1" width="10" height="3" fill="#CDCDF8"/><rect x="7" y="2" width="8" height="1" fill="#E8E8FB"/><rect x="6" y="3" width="10" height="1" fill="#9C9CDC"/><rect x="15" y="1" width="1" height="3" fill="#9C9CDC"/><rect x="6" y="4" width="10" height="3" fill="#CDCDF8"/><rect x="7" y="5" width="8" height="1" fill="#E8E8FB"/><rect x="6" y="6" width="10" height="1" fill="#9C9CDC"/><rect x="15" y="4" width="1" height="3" fill="#9C9CDC"/><rect x="3" y="7" width="10" height="3" fill="#8C98D0"/><rect x="4" y="8" width="8" height="1" fill="#F4F4FC"/><rect x="3" y="9" width="10" height="1" fill="#1E4E8E"/><rect x="12" y="7" width="1" height="3" fill="#1E4E8E"/><rect x="6" y="10" width="10" height="3" fill="#CDCDF8"/><rect x="7" y="11" width="8" height="1" fill="#E8E8FB"/><rect x="6" y="12" width="10" height="1" fill="#9C9CDC"/><rect x="15" y="10" width="1" height="3" fill="#9C9CDC"/><rect x="6" y="13" width="10" height="3" fill="#CDCDF8"/><rect x="7" y="14" width="8" height="1" fill="#E8E8FB"/><rect x="6" y="15" width="10" height="1" fill="#9C9CDC"/><rect x="15" y="13" width="1" height="3" fill="#9C9CDC"/></g><path d="M0 3.5H7M3.5 0V7" stroke="#12A022" stroke-width="2"/></svg>
<svg style="left:77px;top:407px" width="20" height="16" viewBox="0 0 20 16"><g shape-rendering="crispEdges"><rect x="6" y="1" width="10" height="3" fill="#CDCDF8"/><rect x="7" y="2" width="8" height="1" fill="#E8E8FB"/><rect x="6" y="3" width="10" height="1" fill="#9C9CDC"/><rect x="15" y="1" width="1" height="3" fill="#9C9CDC"/><rect x="6" y="4" width="10" height="3" fill="#CDCDF8"/><rect x="7" y="5" width="8" height="1" fill="#E8E8FB"/><rect x="6" y="6" width="10" height="1" fill="#9C9CDC"/><rect x="15" y="4" width="1" height="3" fill="#9C9CDC"/><rect x="3" y="7" width="10" height="3" fill="#8C98D0"/><rect x="4" y="8" width="8" height="1" fill="#F4F4FC"/><rect x="3" y="9" width="10" height="1" fill="#1E4E8E"/><rect x="12" y="7" width="1" height="3" fill="#1E4E8E"/><rect x="6" y="10" width="10" height="3" fill="#CDCDF8"/><rect x="7" y="11" width="8" height="1" fill="#E8E8FB"/><rect x="6" y="12" width="10" height="1" fill="#9C9CDC"/><rect x="15" y="10" width="1" height="3" fill="#9C9CDC"/><rect x="6" y="13" width="10" height="3" fill="#CDCDF8"/><rect x="7" y="14" width="8" height="1" fill="#E8E8FB"/><rect x="6" y="15" width="10" height="1" fill="#9C9CDC"/><rect x="15" y="13" width="1" height="3" fill="#9C9CDC"/></g><path d="M9.6 8.2 L11.4 6.4 L18.3 12.6 L19.3 15.4 L16.4 14.6Z" fill="#2FB03A" stroke="#0B5B12" stroke-width=".8"/><path d="M17.2 14.9 L19.3 15.4 L18.7 13.2Z" fill="#F7E000" stroke="#3A3A00" stroke-width=".5"/></svg>
<svg style="left:102px;top:407px" width="17" height="16" viewBox="0 0 17 16"><g shape-rendering="crispEdges"><rect x="6" y="1" width="10" height="3" fill="#CDCDF8"/><rect x="7" y="2" width="8" height="1" fill="#E8E8FB"/><rect x="6" y="3" width="10" height="1" fill="#9C9CDC"/><rect x="15" y="1" width="1" height="3" fill="#9C9CDC"/><rect x="6" y="4" width="10" height="3" fill="#CDCDF8"/><rect x="7" y="5" width="8" height="1" fill="#E8E8FB"/><rect x="6" y="6" width="10" height="1" fill="#9C9CDC"/><rect x="15" y="4" width="1" height="3" fill="#9C9CDC"/><rect x="3" y="7" width="10" height="3" fill="#8C98D0"/><rect x="4" y="8" width="8" height="1" fill="#F4F4FC"/><rect x="3" y="9" width="10" height="1" fill="#1E4E8E"/><rect x="12" y="7" width="1" height="3" fill="#1E4E8E"/><rect x="6" y="10" width="10" height="3" fill="#CDCDF8"/><rect x="7" y="11" width="8" height="1" fill="#E8E8FB"/><rect x="6" y="12" width="10" height="1" fill="#9C9CDC"/><rect x="15" y="10" width="1" height="3" fill="#9C9CDC"/><rect x="6" y="13" width="10" height="3" fill="#CDCDF8"/><rect x="7" y="14" width="8" height="1" fill="#E8E8FB"/><rect x="6" y="15" width="10" height="1" fill="#9C9CDC"/><rect x="15" y="13" width="1" height="3" fill="#9C9CDC"/></g><path d="M0.700 0.700 L6.300 6.300 M6.300 0.700 L0.700 6.300" stroke="#EC3410" stroke-width="1.700"/></svg>
<svg style="left:126px;top:409px" width="17" height="14" viewBox="0 0 17 14"><g shape-rendering="crispEdges"><rect x="0" y="0" width="12" height="12" fill="#A8A8A8"/><rect x="2" y="2" width="8" height="4" fill="#C8C8C8"/><rect x="3" y="3" width="6" height="1" fill="#DCDCDC"/><rect x="2" y="8" width="7" height="4" fill="#989898"/><rect x="3" y="9" width="2" height="3" fill="#C0C0C0"/><rect x="7" y="7" width="9" height="7" fill="#C4C4D8"/></g><text x="7.300" y="13.300" font-family="Liberation Mono" font-size="7.500" font-weight="bold" fill="#9898B4" letter-spacing="-.7">OK</text></svg>
<svg style="left:151px;top:407px" width="11" height="15" viewBox="0 0 11 15"><path d="M5.500 0.600L10.300 6.600H7.700V14.600H3.300V6.600H0.700Z" fill="#A0A0BC"/></svg>
<svg style="left:174px;top:407px" width="11" height="15" viewBox="0 0 11 15"><path d="M5.500 14.600L10.300 8.600H7.700V0.600H3.300V8.600H0.700Z" fill="#A0A0BC"/></svg>
<svg style="left:194px;top:407px" width="19" height="17" viewBox="0 0 19 17"><g shape-rendering="crispEdges"><rect x="4" y="1" width="8" height="3" fill="#CDCDF8"/><rect x="5" y="2" width="6" height="1" fill="#E8E8FB"/><rect x="4" y="3" width="8" height="1" fill="#9C9CDC"/><rect x="11" y="1" width="1" height="3" fill="#9C9CDC"/><rect x="4" y="4" width="8" height="3" fill="#CDCDF8"/><rect x="5" y="5" width="6" height="1" fill="#E8E8FB"/><rect x="4" y="6" width="8" height="1" fill="#9C9CDC"/><rect x="11" y="4" width="1" height="3" fill="#9C9CDC"/><rect x="1" y="7" width="9" height="3" fill="#A8C0DC"/><rect x="2" y="8" width="7" height="1" fill="#F4F4FC"/><rect x="1" y="9" width="9" height="1" fill="#2C80A4"/><rect x="9" y="7" width="1" height="3" fill="#2C80A4"/><rect x="4" y="10" width="8" height="3" fill="#CDCDF8"/><rect x="5" y="11" width="6" height="1" fill="#E8E8FB"/><rect x="4" y="12" width="8" height="1" fill="#9C9CDC"/><rect x="11" y="10" width="1" height="3" fill="#9C9CDC"/><rect x="4" y="13" width="8" height="3" fill="#CDCDF8"/><rect x="5" y="14" width="6" height="1" fill="#E8E8FB"/><rect x="4" y="15" width="8" height="1" fill="#9C9CDC"/><rect x="11" y="13" width="1" height="3" fill="#9C9CDC"/></g><path d="M3.500 0.500V14" stroke="#1C1CA8" stroke-width="1.300"/><path d="M0.600 11.800H6.400L3.500 16.600Z" fill="#1C1CA8"/><text x="13" y="7.5" font-family="Liberation Mono" font-size="8.500" font-weight="bold" fill="#1C1CA8">A</text><text x="13" y="16" font-family="Liberation Mono" font-size="8.500" font-weight="bold" fill="#D01818">Z</text></svg>
<svg style="left:217px;top:407px" width="19" height="17" viewBox="0 0 19 17"><g shape-rendering="crispEdges"><rect x="4" y="1" width="8" height="3" fill="#CDCDF8"/><rect x="5" y="2" width="6" height="1" fill="#E8E8FB"/><rect x="4" y="3" width="8" height="1" fill="#9C9CDC"/><rect x="11" y="1" width="1" height="3" fill="#9C9CDC"/><rect x="4" y="4" width="8" height="3" fill="#CDCDF8"/><rect x="5" y="5" width="6" height="1" fill="#E8E8FB"/><rect x="4" y="6" width="8" height="1" fill="#9C9CDC"/><rect x="11" y="4" width="1" height="3" fill="#9C9CDC"/><rect x="1" y="7" width="9" height="3" fill="#A8C0DC"/><rect x="2" y="8" width="7" height="1" fill="#F4F4FC"/><rect x="1" y="9" width="9" height="1" fill="#2C80A4"/><rect x="9" y="7" width="1" height="3" fill="#2C80A4"/><rect x="4" y="10" width="8" height="3" fill="#CDCDF8"/><rect x="5" y="11" width="6" height="1" fill="#E8E8FB"/><rect x="4" y="12" width="8" height="1" fill="#9C9CDC"/><rect x="11" y="10" width="1" height="3" fill="#9C9CDC"/><rect x="4" y="13" width="8" height="3" fill="#CDCDF8"/><rect x="5" y="14" width="6" height="1" fill="#E8E8FB"/><rect x="4" y="15" width="8" height="1" fill="#9C9CDC"/><rect x="11" y="13" width="1" height="3" fill="#9C9CDC"/></g><path d="M3.500 0.500V14" stroke="#1C1CA8" stroke-width="1.300"/><path d="M0.600 11.800H6.400L3.500 16.600Z" fill="#1C1CA8"/><text x="13" y="7.5" font-family="Liberation Mono" font-size="8.500" font-weight="bold" fill="#D01818">Z</text><text x="13" y="16" font-family="Liberation Mono" font-size="8.500" font-weight="bold" fill="#1C1CA8">A</text></svg>
<div style="left:30px;top:433px;width:867px;height:145px;background:#fff;border:1px solid #8E887C"></div>
<div style="left:30px;top:433px;width:22px;height:31px;border:1px solid #8E887C;overflow:hidden;background:#EBE5DA"><span class="a t" style="top:0px;left:2px;">№</span></div>
<div style="left:51px;top:433px;width:188px;height:16px;border:1px solid #8E887C;overflow:hidden;background:#C8C0B3"><span class="a t" style="top:0px;left:2px;">Место размещения</span></div>
<div style="left:51px;top:448px;width:188px;height:16px;border:1px solid #8E887C;overflow:hidden;background:#EBE5DA"><span class="a t" style="top:0px;left:2px;">Тип размещения</span></div>
<div style="left:238px;top:433px;width:96px;height:16px;border:1px solid #8E887C;overflow:hidden;background:#EBE5DA"><span class="a t" style="top:0px;left:2px;">Поставщик</span></div>
<div style="left:238px;top:448px;width:96px;height:16px;border:1px solid #8E887C;overflow:hidden;background:#EBE5DA"><span class="a t" style="top:0px;left:2px;">Дата оплаты по...</span></div>
<div style="left:333px;top:433px;width:54px;height:16px;border:1px solid #8E887C;overflow:hidden;background:#EBE5DA"><span class="a t" style="top:0px;left:2px;">Срок С</span></div>
<div style="left:333px;top:448px;width:54px;height:16px;border:1px solid #8E887C;overflow:hidden;background:#EBE5DA"><span class="a t" style="top:0px;left:2px;">Срок по</span></div>
<div style="left:386px;top:433px;width:48px;height:16px;border:1px solid #8E887C;overflow:hidden;background:#EBE5DA"><span class="a t" style="top:0px;left:2px;">Дней</span></div>
<div style="left:386px;top:448px;width:48px;height:16px;border:1px solid #8E887C;overflow:hidden;background:#EBE5DA"><span class="a t" style="top:0px;left:2px;">Ночей</span></div>
<div style="left:433px;top:433px;width:88px;height:16px;border:1px solid #8E887C;overflow:hidden;background:#7FFFD4"><span class="a t" style="top:0px;left:0;right:0;text-align:center;font-weight:bold;font-size:11.5px">Бронь</span></div>
<div style="left:433px;top:448px;width:88px;height:16px;border:1px solid #8E887C;overflow:hidden;background:#7FFFD4"><span class="a t" style="top:0px;left:2px;font-weight:bold;font-size:11.5px">Отмена брони</span></div>
<div style="left:520px;top:433px;width:76px;height:16px;border:1px solid #8E887C;overflow:hidden;background:#7FFFD4"><span class="a t" style="top:0px;left:0;right:0;text-align:center;">Способ</span></div>
<div style="left:520px;top:448px;width:76px;height:16px;border:1px solid #8E887C;overflow:hidden;background:#7FFFD4"></div>
<div style="left:595px;top:433px;width:81px;height:16px;border:1px solid #8E887C;overflow:hidden;background:#7FFFD4"><span class="a t" style="top:0px;left:2px;">Состояние по...</span></div>
<div style="left:595px;top:448px;width:81px;height:16px;border:1px solid #8E887C;overflow:hidden;background:#7FFFD4"><span class="a t" style="top:0px;left:2px;">Состояние от...</span></div>
<div style="left:675px;top:433px;width:66px;height:16px;border:1px solid #8E887C;overflow:hidden;background:#EBE5DA"><span class="a t" style="top:0px;left:2px;">Цена</span></div>
<div style="left:675px;top:448px;width:66px;height:16px;border:1px solid #8E887C;overflow:hidden;background:#FF6A14"><span class="a t" style="top:0px;left:2px;">% Авт.ск.</span></div>
<div style="left:740px;top:433px;width:96px;height:31px;border:1px solid #8E887C;overflow:hidden;background:#EBE5DA"><span class="a t" style="top:0px;left:2px;">Сумма</span></div>
<div style="left:835px;top:433px;width:62px;height:16px;border:1px solid #8E887C;overflow:hidden;background:#EBE5DA"><span class="a t" style="top:0px;left:2px;">Номер вауч</span></div>
<div style="left:835px;top:448px;width:62px;height:16px;border:1px solid #8E887C;overflow:hidden;background:#EBE5DA"><span class="a t" style="top:0px;left:2px;">Дата печати</span></div>
<div style="left:30px;top:463px;width:22px;height:35px;border:1px solid #8E887C;overflow:hidden;background:#fff"><span class="a t" style="top:0px;right:2px;top:1px">1</span></div>
<div style="left:51px;top:463px;width:188px;height:18px;border:1px solid #8E887C;overflow:hidden;background:#000080;outline:1px dotted #fff;outline-offset:-1px"><span class="a t" style="top:0px;left:2px;top:1px;color:#fff;letter-spacing:-.33px">VUOKSENHOVI HOTEL</span></div>
<div style="left:51px;top:480px;width:188px;height:18px;border:1px solid #8E887C;overflow:hidden;background:#fff"><span class="a t" style="top:0px;left:2px;top:1px">DBL</span></div>
<div style="left:238px;top:463px;width:96px;height:18px;border:1px solid #8E887C;overflow:hidden;background:#fff"><span class="a t" style="top:0px;left:2px;top:1px;letter-spacing:-.3px">CHOICE HOTELS</span></div>
<div style="left:238px;top:480px;width:96px;height:18px;border:1px solid #8E887C;overflow:hidden;background:#fff"></div>
<div style="left:333px;top:463px;width:54px;height:18px;border:1px solid #8E887C;overflow:hidden;background:#fff"><span class="a t" style="top:0px;left:2px;top:1px;">01.08.2...</span></div>
<div style="left:333px;top:480px;width:54px;height:18px;border:1px solid #8E887C;overflow:hidden;background:#fff"><span class="a t" style="top:0px;left:2px;top:1px">02.08.2...</span></div>
<div style="left:386px;top:463px;width:48px;height:18px;border:1px solid #8E887C;overflow:hidden;background:#fff"><span class="a t" style="top:0px;right:2px;top:1px;">2</span></div>
<div style="left:386px;top:480px;width:48px;height:18px;border:1px solid #8E887C;overflow:hidden;background:#fff"><span class="a t" style="top:0px;right:2px;top:1px">1</span></div>
<div style="left:433px;top:463px;width:88px;height:18px;border:1px solid #8E887C;overflow:hidden;background:#fff"><span class="a t" style="top:0px;left:2px;top:1px;font-weight:bold;font-size:11.5px;letter-spacing:.5px">31.07.2009</span></div>
<div style="left:433px;top:480px;width:88px;height:18px;border:1px solid #8E887C;overflow:hidden;background:#fff"></div>
<div style="left:520px;top:463px;width:76px;height:18px;border:1px solid #8E887C;overflow:hidden;background:#fff"><span class="a t" style="top:0px;left:2px;top:1px;font-size:10.5px">e-mail</span></div>
<div style="left:520px;top:480px;width:76px;height:18px;border:1px solid #8E887C;overflow:hidden;background:#fff"></div>
<div style="left:595px;top:463px;width:81px;height:18px;border:1px solid #8E887C;overflow:hidden;background:#fff"></div>
<div style="left:595px;top:480px;width:81px;height:18px;border:1px solid #8E887C;overflow:hidden;background:#fff"></div>
<div style="left:675px;top:463px;width:66px;height:18px;border:1px solid #8E887C;overflow:hidden;background:#fff"><span class="a t" style="top:0px;right:2px;top:1px;">3 365,84</span></div>
<div style="left:675px;top:480px;width:66px;height:18px;border:1px solid #8E887C;overflow:hidden;background:#fff"></div>
<div style="left:740px;top:463px;width:96px;height:35px;border:1px solid #8E887C;overflow:hidden;background:#fff"><span class="a t" style="top:0px;right:2px;top:1px">3 365,84</span></div>
<div style="left:835px;top:463px;width:62px;height:18px;border:1px solid #8E887C;overflow:hidden;background:#fff"></div>
<div style="left:835px;top:480px;width:62px;height:18px;border:1px solid #8E887C;overflow:hidden;background:#fff"></div>
<div style="left:31px;top:563px;width:865px;height:14px;background:#FFFBF0"></div>
<div style="left:44px;top:564px;width:811px;height:11px;background:#ECE6DB;border:1px solid #B0AFA5"></div>
<div style="left:32px;top:564px;width:11px;height:12px;background:#ECE6DB;border:1px solid #D3CDC0"></div>
<svg style="left:34px;top:566px" width="6" height="8" viewBox="0 0 6 8"><path d="M5 0.5L1.5 4L5 7.5" fill="none" stroke="#000" stroke-width="1.2"/></svg>
<div style="left:884px;top:564px;width:11px;height:12px;background:#ECE6DB;border:1px solid #D3CDC0"></div>
<svg style="left:887px;top:566px" width="6" height="8" viewBox="0 0 6 8"><path d="M1 0.5L4.5 4L1 7.5" fill="none" stroke="#000" stroke-width="1.2"/></svg>
<div style="left:30px;top:586px;width:867px;height:1px;background:#8C8578"></div>
<svg style="left:34px;top:597px" width="16" height="16" viewBox="0 0 16 16"><g shape-rendering="crispEdges"><rect x="6" y="1" width="10" height="3" fill="#CDCDF8"/><rect x="7" y="2" width="8" height="1" fill="#E8E8FB"/><rect x="6" y="3" width="10" height="1" fill="#9C9CDC"/><rect x="15" y="1" width="1" height="3" fill="#9C9CDC"/><rect x="6" y="4" width="10" height="3" fill="#CDCDF8"/><rect x="7" y="5" width="8" height="1" fill="#E8E8FB"/><rect x="6" y="6" width="10" height="1" fill="#9C9CDC"/><rect x="15" y="4" width="1" height="3" fill="#9C9CDC"/><rect x="3" y="7" width="10" height="3" fill="#8C98D0"/><rect x="4" y="8" width="8" height="1" fill="#F4F4FC"/><rect x="3" y="9" width="10" height="1" fill="#1E4E8E"/><rect x="12" y="7" width="1" height="3" fill="#1E4E8E"/><rect x="6" y="10" width="10" height="3" fill="#CDCDF8"/><rect x="7" y="11" width="8" height="1" fill="#E8E8FB"/><rect x="6" y="12" width="10" height="1" fill="#9C9CDC"/><rect x="15" y="10" width="1" height="3" fill="#9C9CDC"/><rect x="6" y="13" width="10" height="3" fill="#CDCDF8"/><rect x="7" y="14" width="8" height="1" fill="#E8E8FB"/><rect x="6" y="15" width="10" height="1" fill="#9C9CDC"/><rect x="15" y="13" width="1" height="3" fill="#9C9CDC"/></g><path d="M3.5 0V7M0 3.5H7M1.1 1.100L5.900 5.900M5.900 1.100L1.100 5.900" stroke="#FFD400" stroke-width="1.300"/><circle cx="3.500" cy="3.500" r="2.200" fill="#FFD400"/><circle cx="3.500" cy="3.500" r="1" fill="#fff"/></svg>
<svg style="left:57px;top:597px" width="17" height="16" viewBox="0 0 17 16"><g shape-rendering="crispEdges"><rect x="6" y="1" width="10" height="3" fill="#CDCDF8"/><rect x="7" y="2" width="8" height="1" fill="#E8E8FB"/><rect x="6" y="3" width="10" height="1" fill="#9C9CDC"/><rect x="15" y="1" width="1" height="3" fill="#9C9CDC"/><rect x="6" y="4" width="10" height="3" fill="#CDCDF8"/><rect x="7" y="5" width="8" height="1" fill="#E8E8FB"/><rect x="6" y="6" width="10" height="1" fill="#9C9CDC"/><rect x="15" y="4" width="1" height="3" fill="#9C9CDC"/><rect x="3" y="7" width="10" height="3" fill="#8C98D0"/><rect x="4" y="8" width="8" height="1" fill="#F4F4FC"/><rect x="3" y="9" width="10" height="1" fill="#1E4E8E"/><rect x="12" y="7" width="1" height="3" fill="#1E4E8E"/><rect x="6" y="10" width="10" height="3" fill="#CDCDF8"/><rect x="7" y="11" width="8" height="1" fill="#E8E8FB"/><rect x="6" y="12" width="10" height="1" fill="#9C9CDC"/><rect x="15" y="10" width="1" height="3" fill="#9C9CDC"/><rect x="6" y="13" width="10" height="3" fill="#CDCDF8"/><rect x="7" y="14" width="8" height="1" fill="#E8E8FB"/><rect x="6" y="15" width="10" height="1" fill="#9C9CDC"/><rect x="15" y="13" width="1" height="3" fill="#9C9CDC"/></g><path d="M0.700 0.700 L6.300 6.300 M6.300 0.700 L0.700 6.300" stroke="#EC3410" stroke-width="1.700"/></svg>
<svg style="left:80px;top:599px" width="16" height="13" viewBox="0 0 16 13"><path d="M1.500 6.500L5.500 10.500L14 1.800" fill="none" stroke="#1A7A2A" stroke-width="4"/><path d="M2 6.500L5.500 9.800L13.500 2" fill="none" stroke="#4CC04C" stroke-width="2"/></svg>
<div class="t" style="left:98px;top:598px;">Забронировать</div>
<div class="t" style="left:285px;top:594px;font:bold 18.5px 'Liberation Serif',serif;line-height:22px;letter-spacing:.24px;color:#0C7E14">Размещение в VUOKSENHOVI HOTEL:</div>
<div style="left:30px;top:617px;width:867px;height:125px;background:#fff;border:1px solid #8E887C"></div>
<div style="left:30px;top:617px;width:96px;height:31px;background:#C8C0B3;border:1px solid #8E887C;overflow:hidden"><span class="a" style="left:2px;top:1px;line-height:13px;white-space:nowrap">Тип места<br>размещения</span></div>
<div style="left:30px;top:647px;width:96px;height:18px;border:1px solid #8E887C;overflow:hidden;background:#000080"><span class="a t" style="top:0px;left:2px;top:1px;color:#fff">Hotels</span></div>
<div style="left:30px;top:726px;width:96px;height:16px;border:1px solid #8E887C;overflow:hidden;background:#EBE5DA"></div>
<div style="left:125px;top:617px;width:55px;height:31px;background:#EBE5DA;border:1px solid #8E887C;overflow:hidden"><span class="a" style="left:2px;top:1px;line-height:13px;white-space:nowrap">Кол.<br>номеров</span></div>
<div style="left:125px;top:647px;width:55px;height:18px;border:1px solid #8E887C;overflow:hidden;background:#fff"><span class="a t" style="top:0px;right:2px;top:1px;">1</span></div>
<div style="left:125px;top:726px;width:55px;height:16px;border:1px solid #8E887C;overflow:hidden;background:#EBE5DA"></div>
<div style="left:179px;top:617px;width:50px;height:31px;background:#EBE5DA;border:1px solid #8E887C;overflow:hidden"><span class="a" style="left:2px;top:1px;line-height:13px;white-space:nowrap">Валюта</span></div>
<div style="left:179px;top:647px;width:50px;height:18px;border:1px solid #8E887C;overflow:hidden;background:#fff"><span class="a t" style="top:0px;left:2px;top:1px;">EUR</span></div>
<div style="left:179px;top:726px;width:50px;height:16px;border:1px solid #8E887C;overflow:hidden;background:#EBE5DA"></div>
<div style="left:228px;top:617px;width:68px;height:31px;background:#EBE5DA;border:1px solid #8E887C;overflow:hidden"><span class="a" style="left:2px;top:1px;line-height:13px;white-space:nowrap">Курс</span></div>
<div style="left:228px;top:647px;width:68px;height:18px;border:1px solid #8E887C;overflow:hidden;background:#fff"><span class="a t" style="top:0px;right:2px;top:1px;">44,8778</span></div>
<div style="left:228px;top:726px;width:68px;height:16px;border:1px solid #8E887C;overflow:hidden;background:#EBE5DA"></div>
<div style="left:295px;top:617px;width:82px;height:31px;background:#EBE5DA;border:1px solid #8E887C;overflow:hidden"><span class="a" style="left:2px;top:1px;line-height:13px;white-space:nowrap">Цена за номер<br>(вал)</span></div>
<div style="left:295px;top:647px;width:82px;height:18px;border:1px solid #8E887C;overflow:hidden;background:#fff"><span class="a t" style="top:0px;right:2px;top:1px;">75,00</span></div>
<div style="left:295px;top:726px;width:82px;height:16px;border:1px solid #8E887C;overflow:hidden;background:#EBE5DA"></div>
<div style="left:376px;top:617px;width:102px;height:31px;background:#EBE5DA;border:1px solid #8E887C;overflow:hidden"><span class="a" style="left:2px;top:1px;line-height:13px;white-space:nowrap">Цена уборки (вал)</span></div>
<div style="left:376px;top:647px;width:102px;height:18px;border:1px solid #8E887C;overflow:hidden;background:#fff"></div>
<div style="left:376px;top:726px;width:102px;height:16px;border:1px solid #8E887C;overflow:hidden;background:#EBE5DA"></div>
<div style="left:477px;top:617px;width:77px;height:31px;background:#EBE5DA;border:1px solid #8E887C;overflow:hidden"><span class="a" style="left:2px;top:1px;line-height:13px;white-space:nowrap">Цена белья<br>(вал)</span></div>
<div style="left:477px;top:647px;width:77px;height:18px;border:1px solid #8E887C;overflow:hidden;background:#fff"></div>
<div style="left:477px;top:726px;width:77px;height:16px;border:1px solid #8E887C;overflow:hidden;background:#EBE5DA"></div>
<div style="left:553px;top:617px;width:113px;height:31px;background:#EBE5DA;border:1px solid #8E887C;overflow:hidden"><span class="a" style="left:2px;top:1px;line-height:13px;white-space:nowrap">Цена за номер (руб)<br>(уборка+белье)</span></div>
<div style="left:553px;top:647px;width:113px;height:18px;border:1px solid #8E887C;overflow:hidden;background:#fff"><span class="a t" style="top:0px;right:2px;top:1px;">3 365,84</span></div>
<div style="left:553px;top:726px;width:113px;height:16px;border:1px solid #8E887C;overflow:hidden;background:#EBE5DA"></div>
<div style="left:665px;top:617px;width:134px;height:31px;background:#EBE5DA;border:1px solid #8E887C;overflow:hidden"><span class="a" style="left:2px;top:1px;line-height:13px;white-space:nowrap">Стоимость (руб)</span></div>
<div style="left:665px;top:647px;width:134px;height:18px;border:1px solid #8E887C;overflow:hidden;background:#fff"><span class="a t" style="top:0px;right:2px;top:1px;">3 365,84</span></div>
<div style="left:665px;top:726px;width:134px;height:16px;border:1px solid #8E887C;overflow:hidden;background:#EBE5DA"><span class="a t" style="top:0px;right:2px;top:0px">3 365,84</span></div>
<div style="left:798px;top:617px;width:99px;height:31px;background:#EBE5DA;border:1px solid #8E887C;overflow:hidden"><span class="a" style="left:2px;top:1px;line-height:13px;white-space:nowrap">Стоимость (вал)</span></div>
<div style="left:798px;top:647px;width:99px;height:18px;border:1px solid #8E887C;overflow:hidden;background:#fff"><span class="a t" style="top:0px;right:2px;top:1px;">75,00</span></div>
<div style="left:798px;top:726px;width:99px;height:16px;border:1px solid #8E887C;overflow:hidden;background:#EBE5DA"><span class="a t" style="top:0px;right:2px;top:0px">75,00</span></div>
<div class="t" style="left:23px;top:777px;color:#000080">Тип цен: Не заполнено!</div>
<div class="t" style="left:577px;top:777px;">НДС (в т. ч.):</div>
<div class="t" style="right:542px;top:777px;font:bold 12.5px 'Liberation Sans';line-height:15px">0,00</div>
<div class="t" style="left:729px;top:777px;">Всего (руб.):</div>
<div class="t" style="right:362px;top:777px;font:bold 12.5px 'Liberation Sans';line-height:15px">3 365,84</div>
<div class="t" style="left:23px;top:799px;">Комментарий:</div>
<div style="left:105px;top:796px;width:799px;height:19px;background:#fff;border:1px solid #8A8376;box-sizing:border-box;"></div>
<div style="left:15px;top:825px;width:897px;height:26px;background:#ECE6DB;border-top:1px solid #8A8376"></div>
<div class="t" style="left:472px;top:831px;">Оформить документы</div>
<div class="t" style="left:594px;top:831px;">Печать по умолчанию</div>
<div style="left:713px;top:829px;width:1px;height:18px;background:#BDB8A8"></div>
<div class="t" style="left:718px;top:831px;">Печать</div>
<div style="left:762px;top:829px;width:1px;height:18px;background:#BDB8A8"></div>
<div class="t" style="left:768px;top:831px;font:bold 12.5px 'Liberation Sans';line-height:15px">OK</div>
<div style="left:793px;top:829px;width:1px;height:18px;background:#BDB8A8"></div>
<div class="t" style="left:800px;top:831px;">Записать</div>
<div style="left:855px;top:829px;width:1px;height:18px;background:#BDB8A8"></div>
<div class="t" style="left:862px;top:831px;">Закрыть</div>
<svg style="left:0px;top:859px" width="7" height="14" viewBox="0 0 7 14"><path d="M0 0.5H3L6.5 4V13.5H0" fill="#fff" stroke="#6B7FC4"/></svg>
<svg style="left:168px;top:860px" width="11" height="13" viewBox="0 0 11 13"><rect x="0.5" y="0.5" width="10" height="12" fill="#fff" stroke="#8A8AA0"/><path d="M2 2.5H9" stroke="#2A4A9A" stroke-width="1.3"/><path d="M5 6H9M5 8.5H9" stroke="#6A80C0" stroke-width=".9"/><path d="M3.5 5.5L5 7.5L3.5 9.5L2 7.5Z" fill="none" stroke="#2A4A9A" stroke-width=".8"/></svg>
</body></html>
